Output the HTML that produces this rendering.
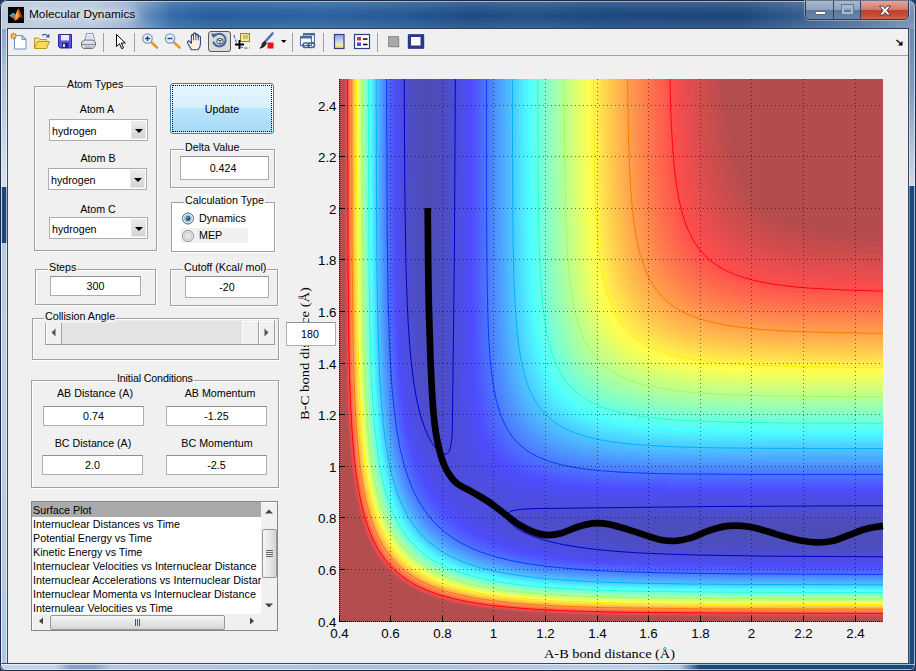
<!DOCTYPE html>
<html><head><meta charset="utf-8"><title>Molecular Dynamics</title>
<style>
*{box-sizing:border-box;margin:0;padding:0}
html,body{width:916px;height:671px;overflow:hidden;background:#16365f}
body{position:relative;font-family:"Liberation Sans",sans-serif;font-size:10.7px;color:#000}
.a{position:absolute}
#win{left:0;top:0;width:916px;height:671px;border-radius:7px 7px 6px 6px;overflow:hidden;
 background:#6f8fb8}
#tb{left:0;top:0;width:916px;height:29px;background:linear-gradient(90deg,#b9c9dd 0,#b3c5db 95px,#94afd0 128px,#608bbb 148px,#326aa7 172px,#265d9c 210px,#2b629f 320px,#245894 400px,#1c4b85 470px,#214f88 530px,#1a4780 600px,#1b467b 740px,#345b8d 800px,#50729e 860px,#7691b4 916px)}
#tbsh{left:0;top:0;width:916px;height:29px;background:linear-gradient(180deg,rgba(255,255,255,.18) 0,rgba(255,255,255,.05) 10px,rgba(0,0,0,0) 16px,rgba(255,255,255,.12) 29px)}
#bl{left:0;top:29px;width:8px;height:642px;background:linear-gradient(90deg,#2a3a55 0,#2a3a55 1px,rgba(255,255,255,.55) 1px,rgba(255,255,255,.55) 2px,rgba(255,255,255,0) 2px,rgba(255,255,255,0) 6px,rgba(255,255,255,.6) 6px,rgba(255,255,255,.6) 7px,#3b4a60 7px),linear-gradient(180deg,#8ba6c8 0,#a9c0dc 40px,#c9d8ea 120px,#d3dfee 158px,#1a4882 158px,#1a4882 214px,#b4cbe8 214px,#b9cfea 400px,#adc6e6 642px)}
#br{left:908px;top:29px;width:8px;height:642px;background:linear-gradient(90deg,#1f2d45 0,#1f2d45 1px,rgba(255,255,255,.35) 1px,rgba(255,255,255,.35) 2px,rgba(255,255,255,0) 2px,rgba(255,255,255,0) 6px,rgba(255,255,255,.25) 6px,rgba(255,255,255,.25) 7px,#101a2c 7px),linear-gradient(180deg,#6a89b1 0,#7f9bbf 60px,#b9cadf 130px,#cfdbe9 157px,#1a4882 157px,#1a4882 642px)}
#br2{display:none}
#bb{left:0;top:663px;width:916px;height:8px;background:linear-gradient(180deg,#3b4a60 0,#3b4a60 1px,rgba(255,255,255,.6) 1px,rgba(255,255,255,.6) 2px,rgba(255,255,255,0) 2px,rgba(255,255,255,0) 6px,rgba(255,255,255,.3) 6px,rgba(255,255,255,.3) 7px,#1f2d45 7px),linear-gradient(90deg,#c3d4ea 0,#c3d4ea 55px,#8aa3c9 70px,#8aa3c9 95px,#b2c9e6 110px,#a9c2e2 400px,#bcd0ea 640px,#b0c6e2 680px,#1a4882 700px,#1a4882 916px)}
#client{left:8px;top:29px;width:900px;height:634px;background:#f0f0f0}
#tool{left:8px;top:29px;width:900px;height:27px;background:#f0f0f0;border-bottom:1px solid #a0a0a0}
.ttl{left:29px;top:6px;font-size:11.8px;line-height:16px;white-space:nowrap;color:#000;text-shadow:0 0 6px #fff,0 0 10px #fff,0 0 14px #fff}
.panel{border:1px solid #a0a0a0;box-shadow:1px 1px 0 #fff, inset 1px 1px 0 #fff}
.pt{background:#f0f0f0;line-height:13px;height:13px;white-space:nowrap;padding:0 1px}
.lbl{line-height:13px;height:13px;white-space:nowrap;text-align:center}
.ed{background:#fff;border:1px solid #abadb3;border-top-color:#8e8f93;text-align:center;white-space:nowrap}
.dd{background:#fff;border:1px solid #abadb3;white-space:nowrap}
.dd span{position:absolute;left:2px;top:5px;line-height:13px}
.dd i{position:absolute;right:1px;top:1px;bottom:1px;width:15px;background:linear-gradient(#ececec,#dedede 50%,#d4d4d4);border:1px solid #e8e8e8}
.dd i:after{content:"";position:absolute;left:3px;top:7px;border:4px solid transparent;border-top:4px solid #000;border-bottom:none}
svg text{font-family:"Liberation Sans",sans-serif}
.li{left:0;width:229px;height:14px;line-height:14px;white-space:nowrap;overflow:hidden;padding-left:1px;font-size:10.75px}
</style></head><body>
<div id="win" class="a">
<div id="tb" class="a"></div><div id="tbsh" class="a"></div>
<div id="bl" class="a"></div><div id="br" class="a"></div><div id="br2" class="a"></div><div id="bb" class="a"></div>
<div class="a" style="left:0;top:0;width:916px;height:671px;border:1px solid #1c2a44;border-radius:7px 7px 6px 6px;box-shadow:inset 0 0 0 1px rgba(235,243,252,.55)"></div>
<div id="client" class="a"></div>
<div class="a" style="left:7px;top:28px;width:902px;height:636px;border:1px solid #3a4760;border-top-color:#2f3c55"></div>
<div id="tool" class="a"></div>

<!-- title -->
<svg class="a" style="left:8px;top:7px" width="16" height="16" viewBox="0 0 16 16"><rect width="16" height="16" fill="#000"/><path d="M1 8.5L5.5 5.5L7.5 7.5L4.5 11z" fill="#3f9fc0"/><path d="M4.5 11L7.5 7.5L10 1.5L11 2L14.8 11.5L12.5 9.5L9.5 12.5L7 14L6 12z" fill="#e8641a"/><path d="M10 1.5L11 2L14.8 11.5L12.5 9.5z" fill="#a12a12"/><path d="M7 9L9.8 3L10.5 9L8 12.5z" fill="#f9b233"/></svg>
<div class="a ttl">Molecular Dynamics</div>
<!-- caption buttons -->
<div class="a" style="left:805px;top:1px;width:104px;height:19px;border:1px solid #2a3a52;border-top:none;border-radius:0 0 5px 5px;overflow:hidden;box-shadow:0 0 0 1px rgba(255,255,255,.35)">
 <div class="a" style="left:0;top:0;width:28px;height:19px;background:linear-gradient(#a9bad0 0,#8ea3bf 45%,#5d789d 50%,#6985aa 100%);border-right:1px solid #2f4260"></div>
 <div class="a" style="left:28px;top:0;width:27px;height:19px;background:linear-gradient(#a9bad0 0,#8ea3bf 45%,#5d789d 50%,#6985aa 100%);border-right:1px solid #2f4260"></div>
 <div class="a" style="left:55px;top:0;width:48px;height:19px;background:linear-gradient(#e3a79b 0,#d3786a 45%,#c0402a 50%,#c6523a 80%,#d0705a 100%)"></div>
 <div class="a" style="left:9px;top:10px;width:11px;height:4px;background:#fff;border:1px solid #5a6b85;border-radius:1px"></div>
 <div class="a" style="left:36px;top:4px;width:11px;height:9px;border:2px solid #a9b9cf;border-top-width:3px;box-shadow:0 0 0 1px #64789a;background:transparent"></div>
 <svg class="a" style="left:71px;top:3px" width="16" height="13" viewBox="0 0 16 13"><path d="M2.5 2L6 2L8 4.6L10 2L13.5 2L10 6.5L13.5 11L10 11L8 8.4L6 11L2.5 11L6 6.5z" fill="#fff" stroke="#5b3a38" stroke-width="1"/></svg>
</div>

<svg class="a" style="left:0;top:29px" width="916" height="27" viewBox="0 29 916 27">
<!-- new -->
<path d="M14.5 35.5h7.5l4 4v9.5h-11.5z" fill="#fff" stroke="#6f8fc3" stroke-width="1"/>
<path d="M22 35.5v4h4z" fill="#c9d6ee" stroke="#6f8fc3" stroke-width="1" stroke-linejoin="round"/>
<path d="M13.5 32.5v7M10 36h7M11 33.5l5 5M16 33.5l-5 5" stroke="#e8782a" stroke-width="1.1"/>
<circle cx="13.5" cy="36" r="2" fill="#ffd75a" stroke="#e8782a" stroke-width=".8"/>
<!-- open -->
<path d="M34.5 48.5v-10.5h4l1.5 1.5h6.5v2" fill="#f7e28a" stroke="#b8951e" stroke-width="1"/>
<path d="M34.5 48.5l3-7h12l-3 7z" fill="#fbd85a" stroke="#b8951e" stroke-width="1" stroke-linejoin="round"/>
<path d="M42 35.5q3-2.5 6 .5" fill="none" stroke="#3a64b4" stroke-width="1.3"/><path d="M49.5 33.5v4h-4z" fill="#3a64b4"/>
<!-- save -->
<path d="M58.5 34.5h13v13.5h-11.5l-1.5-1.5z" fill="#5656dc" stroke="#2b2b96" stroke-width="1"/>
<rect x="61" y="35" width="8" height="5.5" fill="#e9e9f7"/>
<rect x="62" y="43" width="6.5" height="5" fill="#23238a"/><rect x="63" y="44" width="2" height="3" fill="#dcdcf0"/>
<!-- print -->
<path d="M85 40.500l1.500-7h6.500l1.500 7z" fill="#fff" stroke="#7f93b8" stroke-width="1"/>
<path d="M87 36h5M86.700 38h5.600" stroke="#9db4dc" stroke-width=".8"/>
<path d="M81.500 42l3-2h8.500l2.500 2v3.500l-2.500 3h-9.500l-2-2z" fill="#d3d6db" stroke="#70757d" stroke-width="1" stroke-linejoin="round"/>
<path d="M82 44.500h13" stroke="#8b9098" stroke-width="1"/><path d="M84.500 42h8" stroke="#f5f5f5" stroke-width="1"/><path d="M85 47h7" stroke="#9a9ea6" stroke-width="1"/>
<!-- separators -->
<path d="M103.500 33v19M134.500 33v19M292.500 33v19M323.500 33v19M377.500 33v19" stroke="#a0a0a0" stroke-width="1"/>
<!-- pointer -->
<path d="M116.500 34.500v12l3-2.800l2.200 5l1.800-.8l-2.200-4.900h4z" fill="#fff" stroke="#000" stroke-width="1" stroke-linejoin="miter"/>
<!-- zoom in -->
<path d="M151 42l6 5.500" stroke="#e79a2e" stroke-width="2.600" stroke-linecap="round"/>
<circle cx="147.500" cy="38.500" r="4.700" fill="#e6f1fb" stroke="#7d9cc6" stroke-width="1.300"/>
<path d="M145 38.500h5M147.500 36v5" stroke="#1c3f8f" stroke-width="1.300"/>
<!-- zoom out -->
<path d="M173.500 42l6 5.500" stroke="#e79a2e" stroke-width="2.600" stroke-linecap="round"/>
<circle cx="170" cy="38.500" r="4.700" fill="#e6f1fb" stroke="#7d9cc6" stroke-width="1.300"/>
<path d="M167.500 38.500h5" stroke="#1c3f8f" stroke-width="1.300"/>
<!-- hand -->
<g transform="translate(195.5,41.5) scale(1.18) translate(-195,-41.5)"><path d="M191.500 48.500l-3-5.500q-.8-2 1-2l2 2v-6.500q.9-1.600 1.800 0v-1.500q1-1.600 2 0v1q1-1.500 2 0v1.500q1-1.300 1.900 0v6q0 3-2.200 5z" fill="#fdf3dc" stroke="#2b4a8a" stroke-width="1" stroke-linejoin="round"/>
<path d="M193.300 36.500v4M195.300 35v5.500M197.300 36v4.500" stroke="#2b4a8a" stroke-width=".8"/></g>
<!-- rotate (pressed) -->
<rect x="208.500" y="31.500" width="22" height="20" rx="2.500" fill="#dcdcdc" stroke="#585858" stroke-width="1"/>
<path d="M214.500 36a6.300 6.300 0 1 1-1.300 5.500" fill="none" stroke="#46669a" stroke-width="2.100"/>
<path d="M211 33.500l5.800.300l-3.500 4.500z" fill="#46669a"/>
<path d="M217 39.500l3-1.200l3 1.200v3.300l-3 1.400l-3-1.400z M217 39.500l3 1.300l3-1.300M220 40.800v3.400" fill="#eef2f8" stroke="#33445f" stroke-width=".9" stroke-linejoin="round"/>
<!-- data cursor -->
<rect x="240.500" y="33.500" width="9" height="8" fill="#f4ea8e" stroke="#8a8446" stroke-width="1"/>
<path d="M243 36h5M243 38h5" stroke="#8a8446" stroke-width=".8"/>
<path d="M234 35q2 9 6.500 12q4 1.500 9 1" fill="none" stroke="#2a3fd8" stroke-width="1" stroke-dasharray="3 1.500"/>
<path d="M239.500 40v9M235 44.500h9" stroke="#000" stroke-width="1.800"/>
<!-- brush -->
<path d="M272.500 33.500l-8 9" stroke="#4a6fc0" stroke-width="2.600" stroke-linecap="round"/>
<path d="M264.700 41.500l1.800 1.800q-1.500 4-6.500 5q2.500-2.500 2.200-5z" fill="#2a2a2a" stroke="#000" stroke-width=".7"/>
<rect x="267.500" y="42.500" width="6" height="6" fill="#ee1111"/>
<path d="M281 40h5.500l-2.750 3z" fill="#000"/>
<!-- link -->
<rect x="303.500" y="33.500" width="11" height="9" fill="#f3f6fb" stroke="#4c6a9e" stroke-width="1"/><rect x="303.500" y="33.500" width="11" height="2" fill="#4c6a9e"/>
<rect x="300.500" y="36.500" width="11" height="9" fill="#f3f6fb" stroke="#4c6a9e" stroke-width="1"/><rect x="300.500" y="36.500" width="11" height="2" fill="#4c6a9e"/>
<rect x="303" y="43" width="6" height="4.500" rx="2.200" fill="none" stroke="#3b5f9a" stroke-width="1.500"/><rect x="308" y="43" width="6.500" height="4.500" rx="2.200" fill="none" stroke="#3b5f9a" stroke-width="1.500"/>
<!-- colorbar -->
<defs><linearGradient id="cbg" x1="0" y1="0" x2="0" y2="1"><stop offset="0" stop-color="#8f9df0"/><stop offset=".45" stop-color="#b9d4f3"/><stop offset=".75" stop-color="#f3eea0"/><stop offset="1" stop-color="#f3c070"/></linearGradient></defs>
<rect x="334.500" y="34.500" width="9.500" height="14" fill="url(#cbg)" stroke="#2f3f86" stroke-width="1.200"/>
<!-- legend -->
<rect x="354.500" y="34.500" width="15" height="14" fill="#fff" stroke="#2f3f86" stroke-width="1.200"/>
<rect x="357" y="37" width="4" height="3.500" fill="#e03030"/><rect x="357" y="42.500" width="4" height="3.500" fill="#3a50d8"/>
<path d="M363 39h4.500M363 44.500h4.500" stroke="#000" stroke-width="1.300"/>
<!-- hide tools -->
<rect x="389.500" y="37.500" width="10" height="10" fill="#7d7d7d" opacity=".45"/>
<rect x="388.500" y="36.500" width="10" height="10" fill="#a9a9a9" stroke="#8f8f8f" stroke-width="1"/>
<!-- show tools -->
<rect x="408.500" y="35" width="15" height="13" fill="#fff" stroke="#2a3a86" stroke-width="1.400"/>
<rect x="408" y="34.500" width="16" height="2.500" fill="#2a3a86"/><rect x="408" y="45.500" width="16" height="3" fill="#2a3a86"/><rect x="408" y="35" width="3" height="13" fill="#2a3a86"/><rect x="420.500" y="35" width="3.500" height="13" fill="#2a3a86"/>
<!-- corner arrow -->
<path d="M896.500 40l4 3.500" stroke="#000" stroke-width="1.300" fill="none"/><path d="M902.500 41v4.500h-4.500z" fill="#000"/>
</svg>


<!-- Atom Types panel -->
<div class="a panel" style="left:34px;top:86px;width:123px;height:165px"></div>
<div class="a pt" style="left:66px;top:78px">Atom Types</div>
<div class="a lbl" style="left:57px;top:103px;width:80px">Atom A</div>
<div class="a dd" style="left:49px;top:119px;width:99px;height:22px"><span>hydrogen</span><i></i></div>
<div class="a lbl" style="left:58px;top:152px;width:80px">Atom B</div>
<div class="a dd" style="left:48px;top:168px;width:99px;height:22px"><span>hydrogen</span><i></i></div>
<div class="a lbl" style="left:58px;top:203px;width:80px">Atom C</div>
<div class="a dd" style="left:49px;top:217px;width:99px;height:22px"><span>hydrogen</span><i></i></div>

<!-- Update button -->
<div class="a" style="left:170px;top:83px;width:104px;height:51px;border:1px solid #3c7fb1;border-radius:3px;background:linear-gradient(#e8f5fd 0,#d7effc 49%,#bce5fd 50%,#a5d8f5 100%);box-shadow:inset 0 0 0 1px rgba(255,255,255,.7)"></div>
<div class="a" style="left:172px;top:85px;width:100px;height:47px;border:1px dotted #000"></div>
<div class="a lbl" style="left:182px;top:103px;width:80px">Update</div>

<!-- Delta Value -->
<div class="a panel" style="left:170px;top:149px;width:105px;height:39px"></div>
<div class="a pt" style="left:184px;top:141px">Delta Value</div>
<div class="a ed" style="left:180px;top:156px;width:89px;height:24px;line-height:22px;padding-right:3px">0.424</div>

<!-- Calculation Type -->
<div class="a panel" style="left:171px;top:202px;width:104px;height:50px;background:#fff"></div>
<div class="a pt" style="left:184px;top:194px;background:#fbfbfb">Calculation Type</div>
<div class="a" style="left:181px;top:228px;width:67px;height:15px;background:#f0f0f0"></div>
<svg class="a" style="left:181px;top:211px" width="14" height="32" viewBox="0 0 14 32">
 <circle cx="7" cy="7.5" r="5.5" fill="#e9eef3" stroke="#5a6a78"/><circle cx="7" cy="7.5" r="3.6" fill="#bfe4f7" stroke="#7aa9c4" stroke-width=".8"/><circle cx="7" cy="7.5" r="2.4" fill="#1c4f77"/><circle cx="6.3" cy="6.8" r="1" fill="#6fb6dc"/>
 <circle cx="7" cy="25" r="5.5" fill="#f4f4f4" stroke="#8e8f8f"/><circle cx="7" cy="25" r="3.8" fill="#e4e4e4" stroke="#c2c2c2" stroke-width=".8"/>
</svg>
<div class="a" style="left:199px;top:212px;line-height:13px">Dynamics</div>
<div class="a" style="left:199px;top:229px;line-height:13px">MEP</div>

<!-- Steps -->
<div class="a panel" style="left:35px;top:269px;width:121px;height:36px"></div>
<div class="a pt" style="left:48px;top:261px">Steps</div>
<div class="a ed" style="left:50px;top:276px;width:91px;height:20px;line-height:18px">300</div>
<!-- Cutoff -->
<div class="a panel" style="left:170px;top:269px;width:108px;height:37px"></div>
<div class="a pt" style="left:183px;top:261px">Cutoff (Kcal/ mol)</div>
<div class="a ed" style="left:185px;top:276px;width:84px;height:22px;line-height:20px">-20</div>

<!-- Collision Angle -->
<div class="a panel" style="left:32px;top:318px;width:247px;height:42px"></div>
<div class="a pt" style="left:44px;top:310px;z-index:4">Collision Angle</div>
<div class="a" style="left:45px;top:320px;width:230px;height:25px;background:#e3e3e3;border-left:1px solid #a8a8a8;border-bottom:1px solid #9a9a9a;border-right:1px solid #a0a0a0;border-top:1px solid #ececec"></div>
<div class="a" style="left:46px;top:321px;width:16px;height:23px;background:#f0f0f0;border-right:1px solid #a0a0a0;border-left:1px solid #fff;border-top:1px solid #fff"></div>
<div class="a" style="left:259px;top:321px;width:15px;height:23px;background:#f0f0f0;border-left:1px solid #fff;border-top:1px solid #fff"></div>
<div class="a" style="left:242px;top:321px;width:17px;height:23px;background:#f0f0f0;border-right:1px solid #a0a0a0;border-left:1px solid #fff;border-top:1px solid #fff"></div>
<svg class="a" style="left:45px;top:320px" width="230" height="25"><path d="M10.500 8.500v8l-4-4z" fill="#555"/><path d="M219.500 8.500v8l4-4z" fill="#555"/></svg>
<!-- 180 -->
<div class="a ed" style="left:286px;top:322px;width:50px;height:24px;line-height:22px;z-index:5;padding-right:2px">180</div>

<!-- Initial Conditions -->
<div class="a panel" style="left:31px;top:380px;width:248px;height:108px"></div>
<div class="a pt" style="left:116px;top:372px;letter-spacing:-.15px">Initial Conditions</div>
<div class="a lbl" style="left:45px;top:387px;width:100px">AB Distance (A)</div>
<div class="a lbl" style="left:170px;top:387px;width:100px">AB Momentum</div>
<div class="a ed" style="left:43px;top:406px;width:101px;height:20px;line-height:18px">0.74</div>
<div class="a ed" style="left:166px;top:406px;width:101px;height:20px;line-height:18px">-1.25</div>
<div class="a lbl" style="left:43px;top:437px;width:100px">BC Distance (A)</div>
<div class="a lbl" style="left:167px;top:437px;width:100px">BC Momentum</div>
<div class="a ed" style="left:42px;top:455px;width:101px;height:20px;line-height:18px">2.0</div>
<div class="a ed" style="left:166px;top:455px;width:101px;height:20px;line-height:18px">-2.5</div>

<!-- listbox -->
<div class="a" style="left:31px;top:501px;width:247px;height:130px;background:#fff;border:1px solid #828790;overflow:hidden">
 <div class="a" style="left:0;top:0;width:229px;height:15px;background:#aaa"></div><div class="a li" style="top:1px">Surface Plot</div>
 <div class="a li" style="top:15px">Internuclear Distances vs Time</div>
 <div class="a li" style="top:29px">Potential Energy vs Time</div>
 <div class="a li" style="top:43px">Kinetic Energy vs Time</div>
 <div class="a li" style="top:57px">Internuclear Velocities vs Internuclear Distance</div>
 <div class="a li" style="top:71px">Internuclear Accelerations vs Internuclear Distance</div>
 <div class="a li" style="top:85px">Internuclear Momenta vs Internuclear Distance</div>
 <div class="a li" style="top:99px">Internulear Velocities vs Time</div>
 <!-- v scrollbar -->
 <div class="a" style="left:229px;top:1px;width:16px;height:111px;background:#f0f0f0"></div>
 <div class="a" style="left:230px;top:27px;width:15px;height:49px;background:linear-gradient(90deg,#f5f5f5,#e6e6e6 50%,#d6d6d6);border:1px solid #979797;border-radius:2px"></div>
 <svg class="a" style="left:229px;top:1px" width="16" height="111"><path d="M4 10.5h8l-4-4z" fill="#444"/><path d="M4 100.5h8l-4 4z" fill="#444"/><path d="M5 47.5h7M5 49.5h7M5 51.5h7M5 53.5h7" stroke="#666" stroke-width="1"/></svg>
 <!-- h scrollbar -->
 <div class="a" style="left:1px;top:112px;width:244px;height:16px;background:#f0f0f0"></div>
 <div class="a" style="left:18px;top:113px;width:175px;height:15px;background:linear-gradient(#f5f5f5,#e6e6e6 50%,#d6d6d6);border:1px solid #979797;border-radius:2px"></div>
 <svg class="a" style="left:1px;top:112px" width="244" height="16"><path d="M10 3.500v7l-4-3.500z" fill="#444"/><path d="M217 3.500v7l4-3.500z" fill="#444"/><path d="M102.5 5v7M104.5 5v7M106.5 5v7" stroke="#555" stroke-width="1"/></svg>
</div>

<!-- PLOT -->
<svg class="a" style="left:290px;top:56px" width="618" height="607" viewBox="0 0 618 607">
<g transform="translate(49,23)">
<g shape-rendering="crispEdges">
<rect width="544" height="543" fill="#4d4db8"/>
<path fill="#4d4dbd" d="M0 0l80.8 0 0.8 61.3 1.4 51.4 1.3 24.8 1.4 15.5 1.3 8.7 1.4 3.5 1.4-1.3 1.3-6.6 1.4-13.6 1.3-24.4 1.4-46.6 1-72.7 447.8 0 0 446.8-78.9 1.1-45.4 1.4-22.6 1.4-12.5 1.3-5.9 1.4-0.7 1.4 4 1.3 9.4 1.4 16.4 1.3 22 1.1 55.7 1.6 58.5 0.7 0 80.8-544 0 0-541.6z"/>
<path fill="#4d4dc3" d="M0 0l76 0 0.5 62.4 0.8 54.3 1 38.1 1.3 29.8 2 27.7 1.4 12.5 1.3 9.1 1.4 6.8 1.3 4.7 1.4 3 1.4 1.3 1.3-0.5 1.4-2.4 1.3-4.8 1.4-7.8 1.8-17 1.5-24.4 1.1-28.5 1-42.9 1.3-121.4 442.1 0 0 441.1-122.4 1.3-40.8 0.9-29.9 1.2-25.9 1.6-17.4 1.9-7.3 1.3-4.5 1.4-2.2 1.3-0.2 1.4 1.5 1.4 3.1 1.3 5 1.4 7 1.3 9.5 1.4 12.8 1.4 25.4 1.7 27.2 1.3 39.4 1.1 54.4 0.8 65.3 0.5 0 76-544 0 0-541.6z"/>
<path fill="#4d4dc8" d="M0 0l72.7 0 0.6 84.2 0.8 57 1.4 46.1 2 36.7 2.7 29 1.5 10.4 2.6 13.6 1.4 5.1 2.7 7 1.4 2.1 1.3 1.2 1.4 0.1 1.3-0.9 2-3.8 1.5-5.4 1.2-6.8 2.1-18.5 1.8-29 1.3-34 1-48.8 0.8-63.9 0.5-81.4 438 0 0 437-144.2 1.2-47.6 1-36.7 1.3-29.9 1.9-17.7 2-5.4 0.9-6.8 1.8-2.4 0.9-1.7 1.1-1.1 1.6 0.2 1.3 1.3 1.4 2.2 1.4 7.3 2.7 5.2 1.3 13.5 2.6 11 1.5 29.5 2.7 35.6 1.9 46.3 1.4 55.7 0.8 85.7 0.6 0 72.7-544 0 0-541.6z"/>
<path fill="#4d4dcd" d="M0 0l70.1 0 0.6 95 0.9 61.1 1.6 50.2 2.1 36.7 1.7 19 1.9 15.1 1.4 9.3 2.7 12.9 2.7 9.6 2.7 6.9 2.7 4.4 1.4 1.3 1.3 0.7 1.4 0.1 1.4-0.8 0.9-1.1 1.8-3.6 1.3-4.7 1.4-7.1 1.4-10.8 0.9-10.5 1.6-28.5 1.4-44.8 1-52.9 0.7-66.5 0.4-91 434.6 0 0 433.6-157.8 1.1-57.4 1.1-41.4 1.3-29 1.7-11.4 1-10.1 1.4-6.7 1.3-4.5 1.4-2.8 1.4-1.6 1.3-0.6 1.4 0.1 1.3 0.8 1.4 1.4 1.3 4.6 2.8 6.9 2.7 9.8 2.7 12.7 2.5 9.9 1.6 14.6 1.7 19.1 1.7 35.3 2.1 51.7 1.6 66.7 1 89.7 0.5 0 70.1-544 0 0-541.6z"/>
<path fill="#4d4dd3" d="M0 0l67.8 0 0.6 95 1 70.3 1.5 50.5 1.2 22.3 1.4 19.8 1.7 17.7 2.3 17.9 2.7 15.1 2.8 11.3 2.7 8.7 4.1 9.4 2.7 4.3 1.3 1.6 2.8 1.9 1.3 0.3 1.4-0.2 1.3-0.9 1.4-1.8 1.4-3 1.6-6.3 1.1-6.7 1.1-10.9 1.6-27.7 1.4-45.6 1.1-66.5 0.8-77.4 0.4-99.1 431.5 0 0 430.5-100.6 0.5-79 0.7-66.6 1.2-46.2 1.4-25.8 1.6-10.9 1.1-6.8 1.2-5.8 1.6-2.8 1.4-1.7 1.3-0.8 1.4-0.1 1.4 0.3 1.3 2.1 2.7 1.6 1.4 4.4 2.7 9.5 4.1 8.8 2.7 11.5 2.7 15.3 2.7 16.2 2.1 17.6 1.7 22.9 1.7 19.3 0.9 53 1.7 68 0.9 96.6 0.6 0 67.8-544 0 0-541.6z"/>
<path fill="#4d4dd8" d="M0 0l65.9 0 0.6 112.7 1.2 71.9 1.9 51.6 1.4 21.7 1.8 21.7 2 16.6 2.7 17 2.7 12.7 4.1 14.2 4.1 10.4 2.7 5.3 2.7 4.3 2.8 3.3 2.7 2.4 2.7 1.3 1.4 0.1 1.3-0.3 2-1.7 1.5-2.7 1.2-4.1 1.4-10.9 1.1-19 1.1-52.9 1.2-89.1 1.1-186.5 428.7 0 0 427.7-189 1.1-85.7 1.2-54.4 1.1-17.7 0.9-12.2 1.6-3.3 0.8-3.2 1.4-1.7 1.4-0.8 1.3-0.2 1.3 0.2 1.4 1.3 2.7 2.5 2.7 3.4 2.7 4.3 2.7 5.4 2.8 10.4 4 14.4 4.1 12.9 2.7 17.2 2.7 16 1.9 20.4 1.8 21.8 1.3 51.7 2 72.1 1.2 114.2 0.6 0 65.9-544 0 0-541.6z"/>
<path fill="#4d4dde" d="M0 0l64.1 0 0.7 119.5 1.3 76 0.9 28.5 1.3 27.1 1.7 23.1 2.1 20.8 2.7 19.3 3.6 18.3 4.6 16.3 4 10.8 5.5 10.8 2.7 4.3 4.1 5.3 4.1 4.2 2.7 2.1 2.7 1.6 2.7 0.8 1.4-0.1 1.3-0.5 1.4-1.4 1.4-4.1 0.5-6.7-1.1-47.5-0.2-35.3 1.2-167 0.5-126.2 426.1 0 0 425.1-125.1 0.4-170 1.3-35.4-0.3-44.9-1-6.8 0.3-4 0.9-1.9 0.9-0.9 0.9-0.8 1.8 0.4 2.7 2.1 4.1 2.2 2.7 4.2 4.1 5.4 4.1 4.3 2.7 10.9 5.4 10.9 4.1 14.5 4.1 19.4 3.9 17.7 2.5 19 2 24.5 1.8 25.8 1.3 29.9 1.1 76.2 1.3 122.4 0.7 0 64.1-544 0 0-541.6z"/>
<path fill="#4d4de3" d="M0 0l62.5 0 0.8 141.2 0.8 44.8 1.2 40.5 1.4 30.1 2.3 29.8 2.7 23.1 3.1 19.2 4.1 17.8 4.1 13.1 5.4 13.3 2.7 5.3 4.1 6.9 5.4 7.7 6.8 7.9 16.7 16.1 14.3 14.9 7.1 6.8 8.6 6.8 11 6.7 11.5 5.5 11.2 4.1 14.6 4 12.6 2.7 16.4 2.8 20.2 2.4 18.1 1.6 24.1 1.6 25.9 1.1 32.5 1 76.2 1.1 115.6 0.6 0 62.5-544 0 0-541.6zM120.4 0l423.6 0 0 422.6-262.5 1.1-38.1-0.3-28.5-0.8-15-0.9-13.6-1.3-12.2-1.7-9.5-2-8.2-2.4-6.8-2.7-5.4-3.1-5.5-4.5-4-4.9-3.1-5.4-2.8-6.8-2.8-9.5-1.9-9.5-1.5-10.9-1.3-13.6-0.9-16.2-0.9-28.6-0.2-38 1.1-259.2z"/>
<path fill="#4d4de8" d="M0 0l61 0 0.8 137.1 0.7 48.9 0.9 35.3 1.4 32.6 1.8 27.1 2.6 25.8 2.8 19 4.1 20.4 4.1 14.8 5.5 14.5 5.4 11.2 6.8 11 4.1 5.6 5.4 6.6 11.5 12.3 12.9 12.2 10 8.1 10.1 6.8 10 5.5 12.7 5.4 12.3 4.1 16.1 4 14.6 2.8 20.4 2.9 23.1 2.3 22.3 1.5 28.3 1.4 29.7 0.9 80.2 1.3 122.4 0.6 0 61-544 0 0-541.6zM122.8 0l421.2 0 0 420.2-248.9 0.8-42.1-0.4-30-1.1-14.9-1-13.6-1.5-12.3-2-9.5-2.3-9.5-3.2-6.8-3.1-6.8-4.4-4.8-4.3-4.7-5.6-4-6.6-3.6-8.1-2.5-8.2-2.4-10.8-1.7-10.9-1.4-12.2-1-14.9-1.1-29.9-0.4-42.1 0.8-247z"/>
<path fill="#4d4dee" d="M0 0l59.6 0 0.7 133 0.6 47.5 0.9 36.7 1.2 31.2 1.7 28.5 1.9 23.2 2.8 22 2.7 16 4.1 17.9 2.7 9.3 2.7 7.9 5.4 12.9 6.8 12.4 8.2 11.8 5.4 6.7 5.5 6 11.8 11.4 10 8.1 12.3 8.2 10.3 5.4 12.9 5.5 12.4 4 16.3 4.1 14.6 2.8 20.4 2.9 21.8 2.1 23.3 1.7 27.9 1.4 30.4 0.9 81.6 1.3 125.1 0.6 0 59.6-544 0 0-541.6zM125 0l419 0 0 418-240.7 0.5-43.5-0.5-31.3-1.3-15-1.1-13.6-1.6-12.2-2.2-9.5-2.4-8.2-2.7-8.2-3.8-6.8-4.4-5.6-4.8-4.7-5.5-4.4-6.7-3.8-8.2-2.8-8.1-2.4-9.5-2.2-12.3-1.6-13.5-1.3-16.3-1.2-31.2-0.5-43.5 0.5-237.5z"/>
<path fill="#4d4df3" d="M0 0l58.3 0 0.7 135.8 0.6 47.5 0.9 36.6 1.2 32.6 1.7 28.5 1.9 22 2.7 22.2 2.9 16.9 4 17.6 2.6 9.1 2.7 8 5.5 13 6.8 12.7 8.1 11.9 9.6 11.3 10.4 10.1 10 8.1 5.9 4.1 6.6 4 10.4 5.5 13.1 5.4 12.6 4.1 16.4 4.1 15.2 2.8 20.4 2.8 21.8 2.2 23.4 1.7 28.4 1.3 31.1 1 81.6 1.2 126.5 0.6 0 58.3-544 0 0-541.6zM127.2 0l416.8 0 0 415.8-232.6 0.4-44.8-0.6-32.7-1.4-16.3-1.4-13.6-1.7-10.9-1.9-10.9-2.8-9.5-3.4-7.8-3.9-6.2-4.1-6.2-5.4-4.6-5.4-4.4-6.8-3.9-8.2-3.3-9.5-2.4-9.5-2.2-12.2-1.6-13.6-1.3-14.9-1.4-32.6-0.6-43.4 0.4-232.1z"/>
<path fill="#4d4df8" d="M0 0l57.1 0 0.6 135.8 0.6 47.5 0.8 36.6 1.2 32.6 1.6 28.5 2 23.9 2.5 20.9 3 18.1 4 18.2 2.8 9.5 2.7 8.1 5.4 13.2 6.8 12.8 6.8 10.2 4.1 5.3 5.4 6.3 9.8 9.6 10.1 8.2 10.3 6.7 12.8 6.8 13.3 5.5 12.7 4 16.6 4.1 15.1 2.8 20.4 2.8 23.1 2.3 23.8 1.6 29.2 1.4 28.6 0.8 81.6 1.3 129.2 0.5 0 57.1-544 0 0-541.6zM129.4 0l414.6 0 0 413.6-227.1 0.3-46.3-0.7-32.6-1.4-15-1.3-13.6-1.7-12.2-2.2-10.9-2.8-9.5-3.4-8.1-4-6.9-4.5-5.7-5-5.1-6-4.9-7.6-3.9-8.1-2.9-8.2-2.8-10.8-2.2-12.3-1.8-13.5-1.2-15-1.5-32.5-0.7-46.2 0.3-225.3z"/>
<path fill="#4d4dfe" d="M0 0l55.9 0 0.6 137.1 0.6 47.7 0.8 36.5 1.2 32.6 1.6 28.5 1.9 23.4 2.4 21.4 3 18.5 4.1 18.6 4.1 13.9 5.4 14.2 6.7 13.5 6.9 10.9 4.1 5.4 5.4 6.5 9.8 9.8 10.1 8.1 10.3 6.8 13 6.8 12.6 5.1 13.7 4.4 16.8 4.1 14.9 2.7 19.9 2.7 21.7 2.2 24.5 1.6 28.6 1.4 29.9 0.9 81.6 1.2 131.9 0.6 0 55.9-544 0 0-541.6zM131.4 0l412.6 0 0 411.6-223 0.1-46.3-0.7-34-1.6-14.9-1.4-13.6-1.8-12.3-2.3-10.9-2.9-9.5-3.5-7.7-3.8-7.2-4.9-5.5-4.8-5.4-6.2-4.7-7.2-3.9-8.1-3-8.2-2.6-9.5-2.5-12.2-1.8-13.6-1.5-16.3-1.7-33.9-0.7-46.2 0.1-221.2z"/>
<path fill="#4d51ff" d="M0 0l54.8 0 0.6 138.5 1.4 84.1 1.2 34 1.5 27.1 1.7 22.1 2.6 22.7 2.8 18.4 4.1 19 4.1 14.2 5.4 14.4 2.8 6 4 7.8 6.8 10.7 8.2 10.4 4.6 5 5.6 5.4 10.1 8.2 11 7.1 12.5 6.5 13.3 5.3 13.3 4.2 17.2 4 15.2 2.7 20.3 2.8 21.1 2 24.4 1.6 27.2 1.3 31.3 0.9 81.6 1.3 133.3 0.5 0 54.8-544 0 0-541.6zM133.4 0l410.6 0 0 409.6-219 0-46.2-0.8-34-1.6-16.3-1.5-13.6-1.9-12.3-2.3-9.5-2.6-9.5-3.4-8.2-4-7.1-4.6-6.5-5.5-5.4-6.3-4.8-7.2-4-8.2-3.4-9.5-2.6-9.5-2.4-12.2-1.8-13.6-1.5-16.3-1.7-33.9-0.8-46.1 0-217.2z"/>
<path fill="#4d56ff" d="M0 0l53.7 0 0.6 141.2 1.4 84.1 1.2 34 1.5 27.1 1.7 21.8 2.5 21.7 2.7 17.8 4.1 19.4 4 14.4 5.5 14.7 6.7 13.8 6.9 11 8.1 10.4 9.7 9.8 10 8.1 10.5 6.8 13.2 6.8 13.8 5.4 13.6 4.2 17.3 4 15.6 2.7 21.1 2.7 20.8 1.9 24.4 1.6 27.2 1.2 31.3 1 80.3 1.1 134.6 0.6 0 53.7-544 0 0-541.6zM135.4 0l408.6 0 0 407.6-152.3 0.2-62.6-0.2-47.6-0.9-34-1.7-16.3-1.6-13.6-1.8-10.9-2.2-10.9-2.8-9.5-3.5-8.1-4-7.6-4.9-6.3-5.5-5.2-5.9-5-7.6-4.1-8.2-3.4-9.5-3-10.8-2.3-12.3-1.9-13.5-1.4-15-1.7-33.9-0.9-47.5-0.2-62.5 0.2-150.6z"/>
<path fill="#4d5bff" d="M0 0l52.7 0 0.5 135.8 1.3 85.5 1.2 35.3 1.4 28 1.8 23.6 2.3 21.3 2.9 19.4 3.9 19 4.1 14.8 5.4 14.9 6.6 13.7 7 11.3 8.2 10.5 9.3 9.4 10.1 8.2 10.5 6.8 10.9 5.6 13.6 5.6 14.9 4.6 15 3.6 20.4 3.6 19 2.4 19.1 1.8 25.8 1.7 27.2 1.3 35.4 1 84.3 1.1 129.2 0.5 0 52.7-544 0 0-541.6zM137.3 0l406.7 0 0 405.7-148.2 0.1-64-0.2-47.6-0.9-34-1.8-16.3-1.6-13.6-1.9-12.2-2.5-10.9-3-9.5-3.6-8.2-4.2-6.9-4.6-6.1-5.5-5.8-6.8-4.4-6.7-4-8.2-3.5-9.5-3-10.9-2.3-12.2-1.9-13.5-1.4-15-1.8-33.9-1-47.5-0.2-63.8 0.1-146.6z"/>
<path fill="#4d61ff" d="M0 0l51.7 0 0.6 137.1 1.2 84.2 0.9 29.9 1.4 29.8 1.7 24.4 2.3 23.1 3 20.4 3.8 19.5 4.1 15.1 5.5 15.2 2.7 6.2 3.9 7.8 7 11.4 8.1 10.4 9.2 9.4 10.1 8.1 10.6 6.8 10.6 5.5 13.3 5.4 12.9 4.1 16.7 4 18.6 3.4 21.8 2.8 21.7 2 21.8 1.4 29.3 1.3 33.3 0.9 82.9 1.2 133.3 0.5 0 51.7-544 0 0-541.6zM139.2 0l404.8 0 0 403.8-144.2 0.1-65.2-0.3-47.6-0.9-34-1.9-16.4-1.6-13.6-1.9-12.2-2.5-10.9-3-9.5-3.6-8.2-4.2-6.8-4.5-6.8-6-5.4-6.4-4.8-7.4-4-8.1-3.5-9.5-2.9-10.9-2.2-10.8-2-13.6-1.6-16.3-1.8-33.9-1-47.5-0.3-65.2 0.1-142.5z"/>
<path fill="#4d66ff" d="M0 0l50.8 0 0.5 141.2 1.3 84.1 1 32.6 1.4 27.2 1.9 25.8 2.1 20.3 2.7 19 3.6 18.3 4.1 15.5 5.4 15.6 2.7 6.3 4.1 8.1 6.8 11.3 8.2 10.5 9.2 9.5 10.2 8.1 10.7 6.8 10.7 5.4 13.6 5.5 13.6 4.1 16.8 4 17.2 3 20.4 2.6 21.7 2 24.5 1.6 28.6 1.3 31.2 0.9 83 1.1 136 0.5 0 50.8-544 0 0-541.6zM141.1 0l402.9 0 0 401.9-141.4 0.1-65.3-0.3-47.6-1-34-1.9-16.3-1.6-13.6-1.9-12.3-2.5-10.9-3-9.5-3.6-8.1-4.1-7.1-4.7-6.5-5.7-5.5-6.2-4.8-7.1-4.1-8.2-3.6-9.5-3.1-10.8-2.5-12.2-2-13.6-1.6-16.3-1.1-16.3-0.8-19-1-47.5-0.3-65.2 0.1-138.4z"/>
<path fill="#4d6bff" d="M0 0l49.9 0 0.5 139.8 1.3 87.5 1.1 34.7 1.4 27.1 1.6 21.8 2.4 23 3 20.5 3.9 18.9 4.3 15.4 5.2 14.5 5.6 11.8 6.8 11.3 8.2 10.6 4.1 4.5 5.4 5.2 10.3 8.2 10.8 6.8 10.8 5.4 13.9 5.4 14.1 4.2 17.2 4 16.8 2.8 20.7 2.6 20.1 1.8 24.4 1.6 27.2 1.2 32.7 0.9 85.7 1.2 134.6 0.4 0 49.9-544 0 0-541.6zM143 0l401 0 0 400-138.7 0.1-65.3-0.3-47.6-1-19-0.9-16.4-1.1-14.9-1.5-13.6-2-12.3-2.5-10.8-3-9.6-3.5-8.3-4.2-8-5.3-6.2-5.6-5.9-6.7-4.4-6.8-4.1-8.2-3.6-9.5-3-10.8-2.5-12.3-2-13.5-1.6-16.3-1.9-34-1.1-47.5-0.3-65.1 0.1-137.1z"/>
<path fill="#4d71ff" d="M0 0l49 0 0.5 139.8 1.2 85.5 1 32.2 1.3 28.8 1.8 24.6 2.3 23.2 2.9 20.2 3.9 19.5 4.1 15.1 5.4 15.2 2.8 6.1 4 7.9 6.7 10.9 7.4 9.5 9.1 9.1 5.2 4.4 5.4 4.1 11 6.8 11.1 5.4 13.5 5.2 14.6 4.3 16.7 3.8 18.4 3 19.7 2.4 19 1.7 25.8 1.6 27.2 1.2 35.4 1 83 1 134.6 0.5 0 49-544 0 0-541.6zM144.8 0l399.2 0 0 398.2-136 0.1-65.3-0.4-47.6-1-19-0.9-16.3-1.1-16.4-1.7-13.6-2-12.2-2.6-10.8-3.1-9.6-3.7-8.2-4.1-6.8-4.6-6.8-5.9-5.4-6.3-5.2-7.9-4.1-8.2-3.5-9.5-3.1-10.9-2.4-12.2-2-13.6-1.5-14.9-1.2-16.3-0.9-19-1-47.5-0.4-65.1 0.1-134.4z"/>
<path fill="#4d76ff" d="M0 0l48.1 0 0.6 142.5 1.2 84.2 0.9 32.6 1.4 28.5 1.7 24.4 2.2 21.7 2.8 20.4 3.7 18.9 4 15.6 5.5 15.6 5.7 12.4 3.7 6.7 3.5 5.5 7.5 9.8 4.7 5.1 4.8 4.7 9.4 7.5 10.6 6.8 10.6 5.4 13.6 5.5 13.2 4 17.2 4.1 17.9 3.1 21.7 2.7 23.2 2.1 24.4 1.5 28.6 1.2 29.9 0.8 83 1.1 138.7 0.5 0 48.1-544 0 0-541.6zM146.6 0l397.4 0 0 396.4-131.9 0.1-66.7-0.4-47.6-1.1-19-0.9-16.3-1.1-16.3-1.7-13.6-2-12.3-2.5-10.9-3.1-9.5-3.6-8.1-4.1-8.1-5.4-6.1-5.4-5.9-6.8-4.5-6.8-4.1-8.2-3.7-9.5-3.1-10.8-2.5-12.2-2.1-13.6-1.7-16.3-1.1-16.3-0.9-19-1.1-47.5-0.4-65.2 0.1-131.6z"/>
<path fill="#4d7cff" d="M0 0l47.3 0 0.5 139.8 1.2 86.9 1 35.3 1.4 28.5 1.6 23.1 2.4 23.1 2.9 20.3 3.1 16.3 3.9 15.2 5.4 16 5.5 12.3 7 12.2 3.8 5.4 4.1 5.1 4.1 4.6 5.4 5.2 10.1 8.2 10.8 6.8 10.8 5.4 14 5.4 14.2 4.3 17.3 3.9 16.7 2.8 21.3 2.6 20.8 1.8 24.5 1.6 27.2 1.1 32.7 0.9 85.6 1.1 137.4 0.5 0 47.3-544 0 0-541.6zM148.4 0l395.6 0 0 394.6-130.6 0.1-66.6-0.4-47.6-1.2-19-0.9-16.4-1.1-16.3-1.8-13.6-2-12.2-2.6-10.9-3.2-9.5-3.7-8.2-4.2-6.8-4.6-6.8-6-5.4-6.2-5.2-7.9-4.1-8.2-3.6-9.5-3.1-10.8-2.5-12.2-2-13.6-1.7-16.3-1.2-16.3-0.9-19-1.1-47.5-0.4-65.2 0.1-128.9z"/>
<path fill="#4d81ff" d="M0 0l46.5 0 0.5 142.5 1.2 85.6 0.9 31.2 1.3 29.8 1.7 24.5 2.3 23.2 2.7 19.6 3.8 19.6 4.4 16.6 4.6 13.3 6.3 13.7 6.8 11.5 7.6 10.1 8.7 8.9 9 7.4 10.4 6.8 11.9 6 13.6 5.4 14.9 4.5 15 3.4 19 3.3 20.4 2.5 22.7 2 22.2 1.4 31.3 1.3 31.3 0.9 84.3 1 138.7 0.5 0 46.5-544 0 0-541.6zM150.1 0l393.9 0 0 392.9-127.8 0-66.7-0.4-47.6-1.2-19-0.9-16.3-1.1-16.4-1.8-13.6-2-12.2-2.6-10.9-3.1-9.5-3.7-8.2-4.1-8.1-5.5-6.1-5.4-5.9-6.8-4.5-6.8-4.2-8.1-3.8-9.9-3-10.5-2.6-12.2-2.1-13.6-1.7-16.3-1.2-16.3-0.9-19-1.2-47.5-0.4-65.1 0-127.6z"/>
<path fill="#4d86ff" d="M0 0l45.7 0 0.5 145.3 1.2 84.1 1 34 1.3 27.1 1.7 25.8 2 20.4 2.8 20.3 3.6 19.2 4.1 15.8 5.2 15.2 5.7 12.6 6.8 11.7 4.1 5.8 4.1 5 8.1 8.5 9.9 8 10.5 6.8 10.9 5.5 13.6 5.4 13.6 4.1 17.4 4 16.6 2.9 20.4 2.6 21.8 1.9 24.4 1.6 27.2 1.2 32.7 0.9 88.4 1.1 138.7 0.5 0 45.7-544 0 0-541.6zM151.9 0l392.1 0 0 391.1-126.5 0-66.6-0.4-47.6-1.2-19.1-0.9-16.3-1.2-16.3-1.8-13.6-2.1-12.2-2.6-10.9-3.2-9.5-3.8-8.2-4.2-6.8-4.6-6.8-5.9-5.5-6.2-5.4-8.2-4.1-8.1-3.6-9.5-3.1-10.9-2.6-12.2-2-13.6-1.6-14.9-1.2-16.3-1-19-1.2-47.5-0.4-66.6 0-124.8z"/>
<path fill="#4d8cff" d="M0 0l45 0 0.4 142.5 1.2 86.9 1 34.4 1.4 29.3 1.6 23.2 2.2 23.1 3 20.9 3.3 17.1 3.8 14.9 5.1 15.3 5.4 12.3 6.8 11.9 4.1 5.9 3.9 4.8 4.3 4.8 4.8 4.7 4.7 4.1 5.4 4.1 10.8 6.8 11 5.4 14.1 5.4 14.5 4.3 17.6 3.9 16.9 2.7 21.2 2.5 20.4 1.8 25.9 1.6 27.2 1.1 35.3 0.9 84.3 1 137.4 0.4 0 45-544 0 0-541.6zM153.6 0l390.4 0 0 389.4-125.1 0-66.7-0.5-47.6-1.2-19-1-16.3-1.2-15-1.6-13.6-2.1-12.2-2.6-11-3.2-9.4-3.6-8.8-4.5-7.5-5.1-6.5-5.8-5.8-6.8-5.3-8.1-4-8.2-3.6-9.5-3-10.8-2.5-12.2-2.1-13.6-1.6-14.9-1.2-16.3-0.9-19-1.2-47.6-0.5-65.1 0-123.5z"/>
<path fill="#4d91ff" d="M0 0l44.2 0 0.5 145.3 1.2 85.5 0.9 32.6 1.3 28.5 1.6 24.4 2.1 21.7 2.7 20.4 3.8 20.3 4.3 16.4 4.6 13.5 3.4 8.2 2.8 5.7 6.8 11.6 7.5 9.8 4.8 5.3 4.1 3.9 8.6 7.1 10.5 6.8 10.8 5.5 13.6 5.4 13.6 4.2 16.8 3.9 18.5 3.2 21.8 2.6 23.1 2 24.5 1.5 28.6 1.2 31.2 0.8 84.4 1 141.4 0.5 0 44.2-544 0 0-541.6zM155.3 0l388.7 0 0 387.7-123.8-0.1-65.2-0.4-47.6-1.2-19.1-1-16.3-1.2-15-1.7-13.6-2-12.2-2.6-10.9-3-9.5-3.6-8.7-4.4-7.6-5-6.8-5.9-5.9-6.7-5-7.5-4.5-8.8-3.6-9.5-3.1-10.9-2.6-12.2-2.1-13.6-1.6-14.9-1.2-16.3-1-19-1.3-47.5-0.4-65.2-0.1-122.1z"/>
<path fill="#4d96ff" d="M0 0l43.5 0 0.5 143.9 1.1 86.9 1 35.3 1.3 28.5 1.6 23.1 2.2 23 2.8 20.4 3.4 17.6 4.1 16.3 5.1 15.2 5.5 12.2 6.8 11.9 4.1 5.7 4 5.1 8.2 8.5 9.8 8 10.7 6.7 10.9 5.5 14 5.4 14.4 4.3 17.6 3.8 16.4 2.8 21.8 2.6 20.4 1.7 25.8 1.6 27.2 1.1 35.4 1 85.7 1 138.7 0.4 0 43.5-544 0 0-541.6zM157 0l387 0 0 386-122.4-0.1-65.3-0.5-47.6-1.2-19-1-16.3-1.3-16.4-1.8-13.6-2.2-12.2-2.7-10.9-3.2-9.5-3.8-8.2-4.3-6.8-4.7-6.8-6-5.4-6.3-5-7.5-4.2-8.2-3.7-9.5-3.2-10.8-2.6-12.3-2.1-13.5-1.8-16.3-1.2-16.3-1-19-1.2-47.5-0.5-65.2-0.1-119.4z"/>
<path fill="#4d9cff" d="M0 0l42.8 0 0.5 146.6 1.1 85.5 0.9 32.6 1.3 28.5 1.6 24.5 2.1 22.4 2.7 20.4 3.4 18.2 4 16.3 5 15 5.3 12.2 6.9 12.2 4 5.8 4.1 5.2 4.1 4.5 4.9 4.9 4.7 4 5.3 4 10.9 6.8 11.3 5.5 13.2 5 14.9 4.4 15 3.3 19 3.1 20.4 2.5 23.2 1.9 24.4 1.5 28.6 1.1 31.3 0.8 84.3 1.1 142.8 0.4 0 42.8-544 0 0-541.6zM158.7 0l385.3 0 0 384.3-119.7-0.1-65.3-0.5-47.6-1.2-19-1-16.3-1.3-16.3-1.8-13.6-2.1-12.3-2.7-10.9-3.2-9.5-3.7-8.2-4.2-8-5.5-6.1-5.4-5.9-6.8-4.6-6.8-4.8-9.5-3.7-9.5-3.1-10.8-2.5-12.3-2.1-13.5-1.7-15-1.2-16.3-1-19-1.3-46.1-0.5-65.2-0.1-119.4z"/>
<path fill="#4da1ff" d="M0 0l42.1 0 0.5 143.9 1.1 88.2 1 35.3 1.3 28.5 1.6 24.1 2.1 22.1 2.8 20.4 3.3 17.6 4 16.4 5.5 16 5.5 12.4 6.7 11.5 7.7 10.2 8.6 9 9.1 7.3 10.6 6.8 10.8 5.4 13.9 5.5 14.1 4.1 17.8 4 17.6 2.9 21.2 2.5 20.9 1.8 25.9 1.6 28.5 1.1 34 0.9 85.7 1 140.1 0.4 0 42.1-544 0 0-541.6zM160.4 0l383.6 0 0 382.6-118.3-0.1-65.3-0.5-47.6-1.3-19-1-16.4-1.3-14.9-1.6-13.6-2.1-12.3-2.6-10.8-3.2-9.6-3.6-8.3-4.2-8-5.3-6.8-5.9-5.6-6.5-5.3-7.7-4.3-8.5-3.7-9.5-3.1-10.9-2.7-12.2-2.1-13.6-1.7-14.9-1.3-16.3-1-19-1.2-46.2-0.6-65.1-0.1-118.1z"/>
<path fill="#4da6ff" d="M0 0l41.4 0 0.5 146.6 1.1 86.9 0.9 32.6 1.3 28.5 1.7 25.8 2.1 22 2.7 20.4 3.4 18.7 4.1 16.2 4.7 14.1 5.5 12.5 6.8 12.1 7.5 10.2 4.7 5.3 4.3 4.2 4.8 4.1 5.3 4.1 10.9 6.8 11.4 5.5 13.6 5.1 14.8 4.3 16.5 3.6 19 3 19.1 2.2 23.1 2 24.5 1.4 28.5 1.1 31.3 0.8 84.3 1 144.2 0.5 0 41.4-544 0 0-541.6zM162.1 0l381.9 0 0 380.9-118.3-0.1-65.3-0.6-46.2-1.3-19.1-1-16.3-1.3-16.3-1.8-13.6-2.3-12.3-2.7-10.8-3.3-9.6-3.9-8.1-4.3-6.8-4.7-6.8-6-5.9-6.9-5-7.6-4.3-8.7-3.6-9.5-3.1-10.8-2.6-12.2-2.1-13.6-1.6-14.9-1.3-16.3-1-19-1.2-46.2-0.6-65.2-0.1-115.3z"/>
<path fill="#4dacff" d="M0 0l40.8 0 0.4 143.9 1.1 88.2 1 35.3 1.2 28.5 1.7 25.8 2 20.4 2.6 20.4 3.5 19 4 16.2 4.4 13.6 5.3 12.6 3.3 6.4 3.5 5.9 7.5 10.4 4.7 5.4 4.1 4.1 9.9 8.2 10.5 6.7 10.9 5.5 13.8 5.4 13.7 4.1 18.2 4.1 16.9 2.7 21.7 2.7 21.8 1.8 25.8 1.5 28.6 1.2 34 0.8 85.7 1 141.4 0.4 0 40.8-544 0 0-541.6zM163.8 0l380.2 0 0 379.2-117-0.1-65.2-0.6-46.3-1.3-19-1-16.3-1.4-15-1.7-13.6-2.1-12.2-2.7-10.9-3.3-9.5-3.7-8.2-4.3-8-5.4-6.1-5.4-5.9-6.8-4.6-6.8-4.9-9.5-3.7-9.5-3.1-10.9-2.6-12.2-2.1-13.6-1.7-14.9-1.3-16.3-1-19-1.3-46.2-0.6-65.1-0.1-114z"/>
<path fill="#4db1ff" d="M0 0l40.1 0 0.5 148 1.1 86.8 0.9 32.6 1.2 28.5 1.7 25.8 2.1 22.3 2.7 20.5 3.4 18.3 4 16.3 4.9 14.5 5.4 12.7 6.8 11.9 7.2 9.8 4.8 5.4 4.2 4.1 9.6 7.8 10.9 6.9 11.5 5.6 13 5 15 4.4 14.9 3.3 19.1 3.1 20.4 2.5 23.1 1.9 24.5 1.5 29.9 1.2 31.3 0.7 85.6 1.1 144.2 0.4 0 40.1-544 0 0-541.6zM165.5 0l378.5 0 0 377.5-114.2-0.1-65.3-0.6-46.3-1.3-19-1-16.3-1.3-15-1.7-13.6-2.1-12.2-2.7-10.9-3.1-9.5-3.7-8.4-4.2-7.9-5.3-6.8-6-5.7-6.4-5.2-7.7-4.4-8.6-3.7-9.5-3.2-10.8-2.7-12.3-2.2-13.5-1.7-15-1.3-16.2-1-19.1-1.3-46.1-0.6-65.2-0.1-112.6z"/>
<path fill="#4db7ff" d="M0 0l39.5 0 0.4 145.3 1.1 88.2 1 35.3 1.2 28.5 1.7 25.6 1.9 20.5 2.6 20.4 3.4 19 4 16.3 4.4 13.6 5.4 12.9 3.2 6.1 3.6 6.2 4.1 6 4.1 5.3 8.2 8.6 9.5 7.8 10.5 6.8 11.2 5.6 13.5 5.3 13.7 4.1 18.3 4 17.1 2.8 21.8 2.6 21.7 1.8 25.9 1.6 27.2 1 35.3 0.9 87.1 1 141.4 0.4 0 39.5-544 0 0-541.6zM167.1 0l376.9 0 0 375.9-112.9-0.2-65.3-0.5-46.2-1.4-19-1-16.4-1.4-14.9-1.7-13.6-2.1-12.3-2.7-10.8-3.2-9.6-3.8-9.5-4.9-6.8-4.7-6.8-6.1-5.4-6.2-5-7.5-4.3-8.1-3.7-9.5-3.3-10.9-2.7-12.2-2.2-13.6-1.7-14.9-1.3-16.3-1.1-19-1.3-46.2-0.6-63.8-0.2-112.6z"/>
<path fill="#4dbcff" d="M0 0l38.9 0 0.4 149.3 1.1 86.9 0.9 32.6 1.2 28.5 1.7 25.8 2 21.9 2.8 20.8 3.3 18.4 4 16.3 4.9 14.7 5.4 12.6 6.8 12 7 9.5 3.9 4.5 5.1 5 4.7 4.1 5.2 4 10.9 6.8 11.2 5.5 13.2 5 15 4.4 15 3.2 19 3.2 20.4 2.4 23.1 1.9 24.5 1.5 28.6 1.1 32.6 0.8 85.7 1 145.5 0.4 0 38.9-544 0 0-541.6zM168.8 0l375.2 0 0 374.2-112.9-0.1-63.9-0.6-46.2-1.4-19.1-1.1-16.3-1.3-15-1.7-13.6-2.3-12.2-2.7-10.9-3.2-9.5-3.8-8.4-4.4-7.9-5.4-6.1-5.5-5.9-6.8-4.6-6.7-4.3-8.2-3.8-9.5-3.3-10.9-2.8-12.2-2.2-13.5-1.7-15-1.4-16.3-1.1-19-1.3-46.1-0.7-63.8-0.1-111.3z"/>
<path fill="#4dc1ff" d="M0 0l38.3 0 0.4 146.6 1.1 88.2 0.9 35.3 1.2 28.5 1.6 24.6 2 21.6 2.8 21.7 3.4 18.5 4.1 16.5 4.5 13.9 5.2 12.2 3.6 6.8 3.2 5.4 3.9 5.7 4 5.2 8.2 8.6 9.3 7.7 10.6 6.8 11.4 5.7 13.4 5.1 13.8 4.1 18.4 4.1 16.9 2.7 21.8 2.6 20.4 1.7 25.8 1.5 28.6 1.2 35.4 0.9 87 0.9 142.8 0.4 0 38.3-544 0 0-541.6zM170.5 0l373.5 0 0 372.5-111.5-0.1-63.9-0.6-46.3-1.4-19-1.1-16.3-1.4-15-1.7-13.6-2.3-12.2-2.7-10.9-3.3-9.5-3.8-8.2-4.3-7.3-5-6.3-5.6-5.9-6.6-5-7.4-4.6-8.9-3.5-9-3.1-10-2.8-12.2-2.2-13.6-1.8-14.9-1.4-16.3-1.1-19-1.4-46.2-0.6-63.8-0.1-109.9z"/>
<path fill="#4dc7ff" d="M0 0l37.7 0 0.4 146.6 1.1 89.6 0.9 33.9 1.2 28.5 1.6 24.5 2 22.4 2.7 21.1 3.4 18.9 4 16.3 4.8 14.8 5.5 12.6 6.8 12 6.9 9.5 4 4.5 4.9 5 4.7 4.1 5.3 4 9.5 6 12.3 6.1 12.2 4.7 13.6 4.1 16.3 3.7 19.1 3.1 21.7 2.6 23.2 2 24.4 1.4 28.6 1.1 32.6 0.8 88.4 1 144.2 0.4 0 37.7-544 0 0-541.6zM172.1 0l371.9 0 0 370.9-110.2-0.2-63.9-0.6-46.2-1.4-19.1-1.1-16.3-1.4-14.9-1.8-13.6-2.3-12.3-2.7-10.9-3.4-9.5-3.9-8.1-4.3-6.8-4.7-6.8-6-5.5-6.2-5.2-7.8-4.3-8.2-3.7-9.5-3.3-10.8-2.7-12.2-2.2-13.6-1.8-14.9-1.3-16.3-1.1-17.7-1.4-46.1-0.6-63.8-0.2-108.6z"/>
<path fill="#4dccff" d="M0 0l37.1 0 0.4 149.3 1.1 88.3 0.9 32.5 1.3 31.1 1.5 23.2 2.1 23.1 2.7 20.4 3.2 18 4.1 16.7 4.6 14.2 5.2 12.2 3.5 6.8 3.3 5.4 3.8 5.6 4.1 5.2 8.1 8.7 9.4 7.6 10.6 6.8 11.3 5.7 13.6 5.2 15 4.3 17.6 3.8 17 2.7 21.1 2.5 20.4 1.7 25.9 1.6 28.5 1.1 35.4 0.8 87 1 144.2 0.4 0 37.1-544 0 0-541.6zM173.8 0l370.2 0 0 369.2-108.8-0.1-63.9-0.7-46.3-1.4-19-1.1-16.3-1.4-15-1.9-13.6-2.2-12.2-2.9-10.5-3.2-9.9-4.1-7.6-4-7.4-5.1-6.4-5.8-5.8-6.7-4.7-6.9-4.2-8.1-3.9-9.5-3.3-10.9-2.7-12.2-2.3-13.6-1.7-14.9-1.4-16.3-1.1-17.6-1.4-46.2-0.7-63.8-0.1-107.2z"/>
<path fill="#4dd1ff" d="M0 0l36.5 0 0.4 148 1.1 89.6 0.9 33.9 1.2 28.5 1.6 24.4 1.9 21.8 2.6 20.8 3.6 19.9 4 16.3 4.7 14.5 5.4 12.7 2.8 5.4 4 6.7 7 9.5 3.9 4.5 5 5.1 4.7 4 5.3 4 9.5 6.1 12.2 6 12.3 4.7 13.6 4 16.4 3.7 18.9 3.2 21.8 2.5 21.7 1.9 24.5 1.4 27.2 1.1 34 0.9 88.4 1 146.9 0.4 0 36.5-544 0 0-541.6zM175.4 0l368.6 0 0 367.6-107.4-0.2-64-0.7-46.2-1.4-17.7-1.1-16.3-1.3-15-1.8-13.6-2.3-12.2-2.7-10.9-3.3-9.5-3.9-8.2-4.3-7.7-5.2-6.1-5.5-6-6.7-4.6-6.9-4.3-8.1-3.9-9.5-3.4-10.8-2.7-12.3-2.3-13.5-1.8-15-1.4-16.3-1.1-17.6-1.4-46.2-0.7-62.4-0.2-107.2z"/>
<path fill="#4dd7ff" d="M0 0l36 0 0.4 150.7 1.1 88.2 0.8 31.2 1.2 29.9 1.6 25.8 2.1 23.1 2.9 21.7 3.2 17.6 4 16.3 5 15 5.6 12.8 6.7 11.6 7 9.5 8.1 8.5 9.4 7.8 10.7 6.8 11.2 5.5 13.9 5.3 14.6 4.2 17.7 3.8 18.1 2.9 20 2.3 21.4 1.8 23.5 1.4 31.2 1.2 32.7 0.8 87 0.9 146.9 0.4 0 36-544 0 0-541.6zM177.1 0l366.9 0 0 365.9-107.4-0.2-62.6-0.6-46.2-1.5-17.7-1.1-16.3-1.4-15-1.8-13.8-2.3-12-2.7-10.9-3.4-9.5-3.9-8.2-4.3-6.8-4.7-6.8-5.9-5.5-6.3-5.4-7.9-4.4-8.4-3.7-9.5-3.3-10.9-2.5-10.8-2.3-13.6-1.8-14.9-1.4-16.3-1.1-17.7-1.5-46.1-0.6-62.5-0.2-105.8z"/>
<path fill="#4ddcff" d="M0 0l35.4 0 0.4 149.3 1 88.3 1 35.3 1.2 28.5 1.6 25.8 2 21.7 2.6 20.3 3.4 19 4 16.3 4.5 14.1 5.6 13.1 6.7 11.9 7.1 9.8 3.7 4.3 5.2 5.2 8.4 7 10.9 7 12.3 6 12.2 4.7 13.6 4 17.4 3.9 18 2.9 21.7 2.6 21.8 1.8 25.8 1.5 28.6 1.1 35.3 0.9 87.1 0.9 145.5 0.4 0 35.4-544 0 0-541.6zM178.7 0l365.3 0 0 364.3-106.1-0.2-62.5-0.7-46.3-1.5-17.7-1.1-16.3-1.4-14.9-1.8-13.6-2.3-12.3-2.8-10.9-3.4-9.5-4-8.1-4.4-6.8-4.7-6.8-6-5.5-6.3-5-7.4-4.3-8.1-3.8-9.6-3.3-10.8-2.8-12.2-2.2-13.6-1.8-14.9-1.4-16.3-1-17.7-1.5-46.1-0.7-62.5-0.2-103.1z"/>
<path fill="#4de2ff" d="M0 0l34.9 0 0.4 152 1 88.3 1 33.9 1.2 28.5 1.6 25.8 2 21.7 2.8 21.2 3.3 18.2 4 16.3 4.9 14.9 5.5 12.5 6.8 11.9 7 9.6 7.9 8.3 4.4 3.9 5.3 4.1 10.7 6.7 11.1 5.5 13.4 5.1 15.3 4.4 16 3.4 19 3.1 20.4 2.3 23.1 1.9 24.5 1.4 28.6 1.1 32.6 0.8 85.7 0.9 149.6 0.4 0 34.9-544 0 0-541.6zM180.4 0l363.6 0 0 362.6-104.7-0.2-62.6-0.7-46.2-1.5-17.7-1.1-16.3-1.4-15-1.9-13.6-2.3-12.2-2.9-10.1-3.1-9-3.6-8.5-4.5-7.8-5.4-6.1-5.5-5.9-6.8-4.6-6.8-4.4-8.1-3.8-9.5-3.4-10.9-2.8-12.2-2.3-13.6-1.8-14.9-1.4-16.3-1-17.6-1.5-46.2-0.7-62.4-0.2-101.8z"/>
<path fill="#4de7ff" d="M0 0l34.3 0 0.4 150.7 1.1 88.2 0.9 36.4 1.3 28.8 1.4 23.5 2.1 22.6 2.8 21.8 3.3 18.2 4.1 16.6 4.6 14 5.9 13.6 6.2 10.9 3.7 5.3 4.1 5.2 8.1 8.5 8.3 6.8 10.8 6.9 10.8 5.5 13.6 5.2 15 4.4 17.3 3.7 18.1 2.9 22.1 2.6 21.4 1.7 25.8 1.5 27.2 1 35.4 0.9 87 0.9 146.9 0.4 0 34.3-544 0 0-541.6zM182 0l362 0 0 361-102-0.2-62.6-0.7-46.2-1.5-17.7-1.1-16.3-1.4-15-1.8-13.6-2.3-12.2-2.8-10-3-9-3.6-8.9-4.6-7.5-5-6.8-5.9-5.9-6.7-4.9-7.2-4.2-7.8-4-9.8-3.3-10.5-2.8-12.2-2.3-13.6-1.8-14.9-1.5-16.3-1-17.7-1.5-44.8-0.8-62.4-0.2-101.8z"/>
<path fill="#4decff" d="M0 0l33.8 0 0.4 150.7 1 89.6 0.9 33.9 1.2 28.5 1.5 24.5 2 22.3 2.7 21.5 3.3 18.6 3.9 16.3 4.8 14.9 5.7 13.4 6.2 11.1 7.4 10.1 8.3 8.9 9.4 7.7 9.5 6.2 12.2 6.1 12.3 4.7 13.6 4.1 16.5 3.7 18.8 3.2 21.8 2.6 23.1 1.9 24.5 1.4 28.6 1.1 32.6 0.8 89.8 1 148.2 0.4 0 33.8-544 0 0-541.6zM183.7 0l360.3 0 0 359.3-102-0.2-62.6-0.7-44.8-1.5-19.1-1.2-15.5-1.4-14.4-1.8-13.6-2.3-12.2-2.8-10.9-3.4-9.5-3.9-8.2-4.4-6.8-4.7-6.8-6-5.4-6.1-5.5-8-4.2-8.2-3.8-9.5-3-9.5-2.8-12.2-2.4-13.6-1.8-14.9-1.5-16.3-1-17.6-1.6-44.8-0.7-61.1-0.2-101.8z"/>
<path fill="#4df2ff" d="M0 0l33.3 0 0.4 152 1 88.3 0.8 32.6 1.3 29.8 1.5 25.8 2.1 23.1 2.6 20.4 3.2 18.2 4.1 16.9 4.9 15.1 5.9 13.6 6.2 10.8 7.5 10.1 8.2 8.6 8.6 7.1 10.6 6.8 10.9 5.4 14.2 5.5 14.1 4.1 17.7 3.8 18.6 2.9 20.9 2.4 20.5 1.7 25.7 1.5 31.3 1.1 32.6 0.8 87.1 0.9 148.2 0.4 0 33.3-544 0 0-541.6zM185.3 0l358.7 0 0 357.7-102-0.3-62.6-0.7-44.8-1.6-17.7-1.1-16.3-1.5-15-1.9-13.6-2.4-10.9-2.6-10.9-3.4-9.5-4-7.8-4.3-7.1-4.9-6.7-5.9-5.6-6.4-4.8-7.2-4.3-8.1-3.9-9.5-3.3-10.8-2.6-11-2.3-13.5-1.9-15-1.4-16.3-1.2-17.6-1.5-44.8-0.7-61.1-0.3-100.4z"/>
<path fill="#4df7ff" d="M0 0l32.8 0 0.4 149.3 0.9 89.6 1 35.3 1.1 28.5 1.6 25.8 1.9 21.7 2.5 20.4 3.5 20.4 4 16.2 4.7 14.8 5.4 12.9 6.6 11.7 7 9.8 4.1 4.6 4.6 4.6 9 7.4 9.5 6.2 10.9 5.5 13.6 5.4 13.6 4.1 18.1 4 17.3 2.8 21.8 2.6 21.7 1.8 25.8 1.5 28.6 1.2 35.4 0.8 88.4 1 148.2 0.3 0 32.8-544 0 0-541.6zM187 0l357 0 0 356-100.6-0.2-61.2-0.8-44.9-1.5-17.7-1.1-16.3-1.5-15-1.9-13.6-2.3-10.9-2.5-10.8-3.4-9.6-3.8-8.1-4.3-8-5.5-6.1-5.5-6-6.8-4.6-6.7-4.3-8.2-4-9.5-3.3-10.9-2.6-10.8-2.4-13.6-1.9-14.9-1.4-16.3-1.2-17.7-1.5-44.8-0.8-61-0.2-99.1z"/>
<path fill="#4dfcff" d="M0 0l32.3 0 0.3 150.7 1.1 90.9 0.9 34 1.1 28.5 1.5 24.4 2.1 23.1 2.5 20.4 3.1 17.9 4.1 17.4 4.7 14.9 5.1 12.2 6.5 11.9 6.9 9.8 4 4.6 4.8 4.9 4.7 4.2 5.1 4 9.8 6.3 11.9 5.9 12.6 4.8 15 4.4 16.3 3.6 19 3 20.4 2.4 23.2 1.9 24.4 1.4 30 1.1 32.6 0.8 89.8 1 148.2 0.3 0 32.3-544 0 0-541.6zM188.7 0l355.3 0 0 354.3-99.3-0.2-61.2-0.8-44.9-1.5-17.6-1.1-16.4-1.5-14.9-1.9-13.6-2.4-11.9-2.8-9.9-3.1-9.5-3.9-8.2-4.4-7.1-4.9-6.5-5.7-5.7-6.5-5.1-7.4-4.1-7.7-3.9-9.4-3-9.5-3-12.2-2.4-13.5-1.9-15-1.5-16.3-1.2-17.6-1.5-44.8-0.8-61.1-0.2-97.7z"/>
<path fill="#4ffffc" d="M0 0l31.8 0 0.4 152 0.9 88.3 0.9 34 1.3 31.1 1.4 23.8 2 22.4 2.7 21.7 3.3 19 3.9 16.3 4.4 13.8 5.5 13 6.1 11.2 3.6 5.4 3.9 5.2 8.1 8.8 9.3 7.8 10.5 6.8 11.5 5.7 13.3 5.1 13.9 4.1 17.7 3.9 18 2.9 21.4 2.5 20.4 1.7 25.9 1.5 28.6 1.1 35.3 0.8 88.4 1 149.6 0.3 0 31.8-544 0 0-541.6zM190.3 0l353.7 0 0 352.7-97.9-0.3-61.2-0.7-44.9-1.6-17.7-1.1-16.3-1.5-15-2-13.6-2.4-10.8-2.6-10.9-3.4-9.5-3.9-8.2-4.4-6.8-4.7-6.8-6.1-5.4-6.2-5.3-7.7-4.3-8.2-3.9-9.5-2.9-9.5-2.9-12.2-2.4-13.6-1.8-14.9-1.5-16.3-1.1-17.6-1.5-43.5-0.8-59.7-0.3-97.7z"/>
<path fill="#55fff7" d="M0 0l31.3 0 0.4 150.7 0.9 89.6 0.9 35.3 1.2 28.5 1.5 25.8 1.9 21.7 2.7 21.7 3.3 19 3.9 16.3 4.7 14.9 5.8 13.6 6 10.9 3.5 5.1 4.1 5.3 8 8.6 4.7 4.1 5 3.8 9.5 6.1 12.2 6.1 12.3 4.7 13.6 4 16.7 3.8 18.6 3 21.8 2.6 21.7 1.8 25.9 1.5 28.5 1.1 35.3 0.8 88.5 1 149.6 0.3 0 31.3-544 0 0-541.6zM192 0l352 0 0 351-97.9-0.3-59.9-0.7-44.8-1.6-17.7-1.2-16.3-1.5-15-1.9-13.6-2.4-10.9-2.7-10.8-3.4-9.6-4-7.6-4.1-7.3-5.1-6.5-5.8-5.8-6.7-4.7-6.9-4.3-8.1-3.9-9.5-3.4-10.9-2.5-10.8-2.4-13.6-1.9-15-1.5-16.2-1.1-17.7-1.6-43.4-0.7-59.8-0.3-96.3z"/>
<path fill="#5afff2" d="M0 0l30.8 0 0.4 154.8 1 88.2 0.8 32.6 1.2 29.8 1.5 24.5 2 23.1 2.7 21.7 3.1 17.8 3.8 16.1 4.4 14 5.4 13.3 6.6 12.1 7 9.9 4.1 4.8 4.2 4.3 4.6 4.1 5.2 4 10.5 6.7 11 5.5 13.5 5.2 15 4.3 16.2 3.5 19.1 3.1 20.4 2.3 24.4 2 24.5 1.4 28.6 1 32.6 0.8 87.1 0.9 152.3 0.4 0 30.8-544 0 0-541.6zM193.7 0l350.3 0 0 349.3-96.6-0.2-59.8-0.8-43.5-1.6-17.7-1.1-16.3-1.5-15-1.9-13.6-2.3-10.9-2.6-10.8-3.4-9.6-3.9-8.1-4.3-7.8-5.3-6.1-5.5-6-6.7-4.6-6.8-4.4-8.2-4-9.5-3.4-10.8-2.5-10.9-2.5-13.6-1.9-14.9-1.5-16.3-1.1-17.6-1.6-43.5-0.8-59.7-0.2-95z"/>
<path fill="#5fffec" d="M0 0l30.3 0 0.4 152 1 89.6 0.9 36.7 1.2 28.5 1.6 25.7 1.8 20.5 2.7 21.7 3.3 19 3.8 16.3 4.7 14.6 5.4 12.9 6.6 11.8 7 9.8 8.2 8.8 8.7 7.2 10.3 6.8 10.9 5.5 13.8 5.4 14.8 4.3 17.5 3.8 17.8 2.9 22.5 2.5 21 1.7 25.9 1.5 28.5 1.1 35.4 0.8 88.4 0.9 149.6 0.4 0 30.3-544 0 0-541.6zM195.3 0l348.7 0 0 347.7-95.2-0.3-59.8-0.8-43.6-1.6-17.6-1.1-16.4-1.5-14.9-1.9-13.6-2.4-11.6-2.8-10.2-3.2-9.5-4-8.2-4.3-6.9-4.8-6.7-5.9-5.6-6.3-5.2-7.7-4.6-8.6-3.6-8.9-3.1-10.1-2.9-12.2-2.2-12.2-1.9-15-1.6-16.3-1.1-17.6-1.6-43.4-0.8-59.8-0.3-93.6z"/>
<path fill="#65ffe7" d="M0 0l29.8 0 0.4 153.4 1.1 91 0.8 33.9 1.2 28.5 1.6 25.8 1.8 21.3 2.7 21.8 3.2 18 3.8 16.3 4.7 14.9 5.1 12.2 6.4 11.8 7 9.9 3.8 4.6 4.9 4.9 4.7 4.2 5.2 4 9.7 6.2 12.1 6 12.4 4.7 13.6 4 16.3 3.6 19.1 3.1 21.7 2.6 21.8 1.8 24.5 1.4 28.5 1.1 34 0.8 89.8 1 152.3 0.4 0 29.8-544 0 0-541.6zM197 0l347 0 0 346-95.2-0.3-59.8-0.8-43.6-1.7-17.6-1.1-16.4-1.6-14.9-2-12.3-2.2-10.8-2.6-10.9-3.5-9.5-4-8.2-4.4-6.8-4.7-6.8-6.1-5.4-6.2-5.2-7.5-4.3-8.2-3.8-9.5-3.1-9.6-2.8-12.1-2.2-12.2-2-14.9-1.5-16.3-1.2-17.7-1.6-43.4-0.8-58.4-0.3-93.6z"/>
<path fill="#6affe1" d="M0 0l29.4 0 0.4 154.8 1 88.2 0.8 32.6 1.1 29.8 1.5 25.8 2 23.1 2.7 21.7 3.3 18.6 3.9 16.7 4.2 13.3 5.5 13.2 6.2 11.5 3.6 5.5 3.8 4.9 8.1 8.9 9.5 7.9 10.5 6.8 11.3 5.6 13.6 5.2 14.4 4.1 16.9 3.7 19 3 20.4 2.3 23.1 1.9 24.2 1.3 30.2 1.1 32.7 0.8 88.4 0.9 152.3 0.4 0 29.4-544 0 0-541.6zM198.7 0l345.3 0 0 344.3-93.8-0.3-58.5-0.8-43.5-1.6-17.7-1.2-16.3-1.5-15-2-13.6-2.4-10.9-2.7-10.4-3.3-9.8-4.1-7.5-4-7.6-5.4-6.2-5.5-6-6.8-4.6-6.8-4.4-8.1-3.9-9.5-3.4-10.9-2.6-10.8-2.2-12.3-1.9-14.9-1.5-14.9-1.2-17.7-1.7-43.4-0.8-58.4-0.3-93.6z"/>
<path fill="#6fffdc" d="M0 0l28.9 0 0.4 153.4 1 89.6 0.9 36.6 1.2 28.6 1.5 25.7 1.8 20.4 2.5 20.4 3.5 20.3 3.8 16.3 4.7 15 5.6 13 6.2 11.4 7.4 10.1 8.1 8.8 8.3 6.9 10.8 7 10.8 5.5 13.6 5.3 15 4.3 16.8 3.7 18.6 2.9 21.6 2.5 21.9 1.8 25.8 1.4 28.6 1.1 35.3 0.8 88.4 0.9 151 0.4 0 28.9-544 0 0-541.6zM200.4 0l343.6 0 0 342.6-93.8-0.3-58.5-0.8-43.5-1.7-17.7-1.2-15-1.4-14.1-1.9-13.1-2.3-12.2-3-9.5-3-9.5-3.9-8.2-4.4-7.4-5.1-6.2-5.5-5.5-6-5.2-7.5-4.4-8.2-4-9.3-3.1-9.7-3-12.2-2.2-12.2-2-14.9-1.4-15-1.3-17.6-1.6-43.5-0.9-58.3-0.3-92.3z"/>
<path fill="#75ffd7" d="M0 0l28.5 0 0.4 154.8 1 90.9 0.8 33.9 1.2 28.6 1.5 25.7 1.9 21.8 2.7 21.7 3.1 17.6 3.8 16.3 4.7 15 5 12.2 3.5 6.8 3.1 5.3 6.8 9.7 4.1 4.7 4.5 4.7 4.6 4.1 5.3 4 10.1 6.5 11.7 5.8 12.7 4.8 15 4.3 15 3.3 19 3.1 21.8 2.5 23.1 1.9 24.5 1.3 28.5 1.1 34 0.8 89.8 1 152.3 0.3 0 28.5-544 0 0-541.6zM202.1 0l341.9 0 0 340.9-92.5-0.3-58.5-0.9-43.5-1.6-17.7-1.3-14.9-1.4-15-2-12.2-2.2-11-2.7-10.8-3.4-9.5-3.9-8.2-4.5-6.8-4.7-6.8-6-5.4-6.1-5.4-8-4.1-7.7-3.6-8.6-3.2-9.8-2.9-11.9-2.3-12.3-2-14.9-1.5-14.9-1.2-17.7-1.7-43.4-0.9-58.4-0.3-90.9z"/>
<path fill="#7affd1" d="M0 0l28 0 0.4 156.1 1 88.3 0.8 32.5 1.1 29.9 1.6 25.8 1.9 23.1 2.7 21.7 3.3 19 3.9 16.3 4.3 13.6 5.4 13.2 6 11.2 3.6 5.4 4 5.3 8.2 8.8 9.1 7.6 10.5 6.8 11.6 5.8 13.5 5.1 14.1 4.1 17.3 3.7 19.1 3 20.4 2.3 22.5 1.8 24.3 1.4 30.7 1.1 32.6 0.8 88.4 0.9 153.7 0.4 0 28-544 0 0-541.6zM203.8 0l340.2 0 0 339.2-91.1-0.3-58.5-0.9-43.5-1.7-17.7-1.2-15-1.5-14.9-2-12.3-2.3-10.8-2.6-10.9-3.5-9.5-4-7.9-4.3-7.1-4.9-6.6-5.9-5.6-6.5-4.9-7.1-4.3-8.1-4-9.5-3.2-10.2-2.7-11.6-2.2-12.2-2-14.9-1.5-14.9-1.2-17.7-1.6-43.4-0.9-57-0.3-89.6z"/>
<path fill="#80ffcc" d="M0 0l27.6 0 0.4 153.4 0.9 89.6 0.9 36.6 1.1 28.6 1.6 25.7 1.8 21.8 2.5 20.3 3.5 20.4 3.8 16.3 4.7 14.9 5.6 13.4 6.1 11 3.4 5.1 4.1 5.3 8.1 8.7 4.6 4 5 3.8 9.5 6.1 12.2 6.1 12.3 4.6 13.6 4 17.8 3.9 17.5 2.8 22.7 2.7 22.2 1.7 25.9 1.5 28.5 1 35.4 0.8 88.4 0.9 152.3 0.4 0 27.6-544 0 0-541.6zM205.5 0l338.5 0 0 337.5-89.8-0.3-58.4-0.9-43.6-1.7-17.6-1.3-15-1.5-14.5-1.9-12.7-2.4-12.2-3-9.6-3.2-8.7-3.6-7.6-4.1-7.8-5.4-6.2-5.5-5.9-6.8-4.7-6.8-4.4-8.1-4-9.5-3.4-10.9-2.6-10.8-2.2-12.2-2-15-1.5-14.9-1.2-17.7-1.7-42-0.9-57-0.3-89.6z"/>
<path fill="#85ffc7" d="M0 0l27.2 0 0.3 156.1 1 91 0.9 33.9 1.1 28.5 1.6 25.8 1.9 21.7 2.7 21.7 3 17.7 3.8 16.4 4.6 14.8 5.1 12.2 3.4 6.8 3.2 5.6 6.8 9.6 4.1 4.8 4.4 4.5 4.6 4 5.2 4.1 10.3 6.6 11.5 5.6 13 4.9 14.9 4.3 16.4 3.5 19 3 20.4 2.4 23.1 1.8 24.5 1.4 28.6 1 34 0.8 89.7 1 153.7 0.3 0 27.2-544 0 0-541.6zM207.2 0l336.8 0 0 335.8-89.8-0.4-57.1-0.8-43.5-1.8-17.7-1.2-14.9-1.5-13.6-1.9-13.2-2.4-11-2.7-9.8-3.1-9.6-4-8.1-4.4-7-4.8-6.6-5.9-5.7-6.3-5.2-7.6-4.1-7.6-3.9-9.3-3.1-9.5-3-12.2-2.2-12.2-2.1-14.9-1.4-15-1.3-17.6-1.7-42.1-0.8-57-0.4-88.2z"/>
<path fill="#8affc1" d="M0 0l26.7 0 0.4 156.1 1 89.6 0.8 32.6 1.1 29.9 1.5 25.7 2 23.1 2.7 21.7 3.2 19 3.9 16.3 4.3 13.9 5.5 13.3 2.8 5.4 3.9 6.8 6.9 9.5 8.1 8.8 9 7.5 10.5 6.8 11.8 5.8 13.3 5 14.1 4.1 17.5 3.8 19 2.9 20.4 2.3 23 1.9 24.6 1.3 29.9 1.1 32.7 0.8 88.4 0.9 155 0.4 0 26.7-544 0 0-541.6zM208.9 0l335.1 0 0 334.1-89.8-0.4-57.1-0.9-42.1-1.7-17.7-1.3-15-1.5-14.9-2.1-12.3-2.3-10.9-2.8-10.5-3.4-8.5-3.7-8.3-4.5-6.7-4.7-6.8-6-5.4-6.2-5.1-7.5-4.4-8.2-3.9-9.5-3-9.5-2.6-10.8-2.3-12.3-2.1-14.9-1.5-14.9-1.2-17.7-1.7-42-0.9-57.1-0.4-86.8z"/>
<path fill="#90ffbc" d="M0 0l26.3 0 0.4 154.8 0.9 89.6 0.9 36.6 1.1 28.5 1.6 25.8 1.8 21.7 2.5 20.4 3.4 20.3 3.8 16.3 4.7 15 5.6 13.4 6.1 11 3.5 5.2 4 5.3 8 8.5 4.6 4.1 5.1 3.9 9.5 6 12.3 6.1 12.2 4.6 15 4.3 16.5 3.6 17.5 2.8 23 2.6 21.9 1.8 25.8 1.4 28.6 1 35.3 0.8 88.4 0.9 153.7 0.4 0 26.3-544 0 0-541.6zM210.7 0l333.3 0 0 332.3-87-0.3-57.2-0.9-42.1-1.7-17.7-1.3-15-1.5-14.9-2-12.3-2.3-10.8-2.7-10.9-3.5-9.2-3.9-7.5-4-7.8-5.5-6.1-5.4-5.9-6.8-4.7-6.8-4.4-8.1-3.4-8.2-3.6-10.8-2.7-10.9-2.3-12.2-2.1-14.9-1.5-15-1.2-17.6-1.8-42.1-0.9-57-0.3-85.5z"/>
<path fill="#95ffb6" d="M0 0l25.9 0 0.4 154.8 0.9 90.6 0.9 35.6 1.1 28.5 1.5 25.8 1.9 22.8 2.7 22 3.1 17.6 3.8 16.4 4.6 14.9 5 12.2 3.4 6.8 3.3 5.6 6.8 9.6 4.1 4.8 4.3 4.4 4.5 4.1 5.3 4.1 10.3 6.6 11.5 5.6 13 4.9 15 4.3 16.3 3.5 19 3 20.4 2.3 23.2 1.8 24.4 1.4 28.6 1 35.1 0.8 90 1 153.7 0.3 0 25.9-544 0 0-541.6zM212.4 0l331.6 0 0 330.6-87-0.4-55.8-0.9-42.2-1.7-17.6-1.3-15-1.5-15-2-12.2-2.3-10.9-2.7-9.5-3.1-9.5-3.9-8.2-4.4-7.2-5-6.4-5.6-5.8-6.7-5.1-7.2-4.1-7.7-4-9.5-3.5-10.8-2.6-10.9-2.3-12.2-1.9-13.6-1.5-14.9-1.3-17.7-1.7-42.1-0.9-55.6-0.4-85.5z"/>
<path fill="#9affb1" d="M0 0l25.5 0 0.3 157 1 90.1 0.8 32.5 1.1 29.9 1.5 25.8 2 23.1 2.7 21.7 3.2 18.8 3.8 16.5 4.3 13.8 5.6 13.3 2.7 5.5 4 6.8 6.8 9.5 8.1 8.8 9 7.5 10.5 6.7 11.8 5.9 13.4 5 14.2 4.1 17.3 3.7 19 2.9 20.4 2.3 24.2 1.9 24.8 1.4 29.9 1 32.7 0.8 91.1 0.9 152.3 0.3 0 25.5-544 0 0-541.6zM214.2 0l329.8 0 0 328.8-85.7-0.3-57.1-1-41.2-1.7-17.3-1.3-14.9-1.5-15-2.1-12.2-2.3-10.9-2.7-10.9-3.6-9.4-4.1-7.3-4.1-7.6-5.5-5.6-5.1-5.5-6.1-5.3-7.8-4.2-7.9-3.5-8.3-3.3-10.1-2.7-10.9-2.4-13-1.9-13.6-1.6-14.9-1.2-16.3-1.8-42.1-1-55.6-0.3-85.5z"/>
<path fill="#a0ffac" d="M0 0l25.1 0 0.3 156.1 1 89.6 0.8 35 1.2 30.2 1.5 26.3 1.8 21.2 2.5 20.3 3.4 20.4 3.8 16.3 4.7 14.9 5.6 13.4 6 11.1 3.7 5.4 3.9 5 8 8.6 4.6 4 5.1 3.9 9.5 6.1 12.2 6 12.3 4.6 14.9 4.3 16.9 3.6 18.5 2.9 22.6 2.6 20.9 1.6 25.8 1.4 28.6 1.1 36.7 0.8 88.4 0.9 153.7 0.3 0 25.1-544 0 0-541.6zM215.9 0l328.1 0 0 327.1-85.7-0.4-55.7-0.9-40.8-1.8-17.7-1.3-15-1.5-13.6-1.9-12.2-2.3-10.9-2.7-10.9-3.5-9.5-4-7.4-4.1-7.6-5.2-6.2-5.6-5.9-6.8-4.7-6.8-4.4-8.2-3.9-9.5-3.4-10.6-2.7-11.1-2.2-12.2-1.9-13.6-1.5-14.9-1.2-17.1-1.8-41.3-0.9-55.6-0.4-82.8z"/>
<path fill="#a5ffa6" d="M0 0l24.7 0 0.3 154.8 0.9 90.9 0.9 36.7 1.1 28.5 1.5 25.8 1.9 21.7 2.6 21.7 2.8 17.1 4.1 18 4.2 13.8 5.5 13.5 2.7 5.5 3.8 6.8 6.9 9.7 4.1 4.8 4.4 4.5 4.5 4 5.3 4.1 10.3 6.6 11.5 5.6 13 4.9 13.6 3.9 16.3 3.6 19 3 21.8 2.5 21.7 1.8 25.9 1.4 29.9 1.1 35.4 0.8 89.7 0.9 153.7 0.3 0 24.7-544 0 0-541.6zM217.7 0l326.3 0 0 325.3-84.3-0.4-55.8-0.9-42.1-1.9-16.4-1.2-14.9-1.5-13.6-2-13.1-2.5-11.4-2.9-9.5-3.1-8.2-3.5-8.1-4.4-7.4-5.1-6.2-5.5-5.5-6-5.2-7.5-4.3-7.8-3.7-8.5-3.2-9.5-2.8-10.8-2.5-13-2.1-14.2-1.6-14.9-1.3-17.7-1.7-40.7-1-55.6-0.4-82.8z"/>
<path fill="#aaffa1" d="M0 0l24.3 0 0.4 171 0.5 54.3 0.8 42.1 1.2 36.6 1.6 29.9 2.4 28.6 2.8 21.6 2.7 15.7 3.3 14.2 3.5 12.3 4.6 12.2 4.9 10.5 5.5 9.1 6.6 8.9 7 7.3 9.1 7.6 10.5 6.8 11.7 5.7 13.6 5.2 14.3 4 16.9 3.6 19.1 3 20.4 2.3 23.1 1.8 24.5 1.3 28.5 1.1 34 0.8 91.2 0.9 155 0.3 0 24.3-544 0 0-541.6zM219.5 0l324.5 0 0 323.5-84.3-0.4-54.4-0.9-41.5-1.8-17-1.3-15-1.6-13.6-1.9-12.2-2.4-10.9-2.7-10.9-3.6-9.5-4.2-7.2-4.1-7.6-5.4-5.6-5-5.4-6.2-5.4-7.8-4.1-7.8-3.6-8.5-3.1-9.5-2.9-11.1-2.5-13.3-1.9-13.6-1.5-14.9-1.3-16.3-1.8-40.7-0.9-54.3-0.4-82.8z"/>
<path fill="#b0ff9c" d="M0 0l23.9 0 0.4 176.5 0.6 52.9 0.8 42.1 1.3 36.7 1.6 28.5 2.3 27.1 2.8 21.7 2.9 16.3 2.8 12.2 4 13.6 4.2 11.2 5.4 11.4 5.5 9 6.8 8.9 6.7 7 8.2 6.9 5.5 3.8 5.4 3.2 10.9 5.5 13.6 5.2 15 4.3 17.6 3.7 17.7 2.8 23.1 2.5 20.4 1.6 25.9 1.5 31.3 1.1 34 0.7 88.4 0.9 155 0.3 0 23.9-544 0 0-541.6zM221.3 0l322.7 0 0 321.7-83-0.4-54.4-0.9-40.8-1.8-17.6-1.4-15-1.6-13.6-1.9-12.2-2.4-10.9-2.7-9.5-3.2-9.5-4-7.5-4.1-7.5-5.3-6.3-5.6-5.9-6.8-4.7-6.7-4.4-8.2-3.4-8.1-3.6-10.9-2.7-10.9-2.3-12.2-1.9-13.5-1.6-15-1.2-16.3-1.8-40.7-1-54.3-0.4-81.4z"/>
<path fill="#b5ff96" d="M0 0l23.5 0 0.4 173.8 0.6 54.3 0.7 40.7 1.2 35.3 1.7 31.2 2.1 25.8 2.9 23.1 2.8 16.3 3.4 14.9 4 13.6 4.1 10.8 5.3 10.9 5.8 9.5 6.2 8.1 6.5 6.8 9 7.6 9.6 6.2 10.8 5.6 13.6 5.3 13.6 4 17.7 3.9 19.1 3 21.7 2.5 21.8 1.8 25.8 1.4 28.6 1.1 36.7 0.8 89.8 0.9 155 0.3 0 23.5-544 0 0-541.6zM223.1 0l320.9 0 0 319.9-81.6-0.4-54.4-0.9-40.8-1.8-16.3-1.3-15-1.6-13.6-1.9-13.1-2.5-11.4-2.9-9.5-3.2-8.1-3.4-8.2-4.4-7.3-5.1-6.3-5.5-5.4-6.1-5.3-7.4-4.3-7.8-3.6-8.5-3.2-9.5-2.9-10.9-2.5-12.8-2.1-14.3-1.6-14.9-1.2-16.3-1.8-40.7-1-54.4-0.4-80z"/>
<path fill="#bbff91" d="M0 0l23.1 0 0.4 172.4 0.5 54.3 0.8 42.1 1.2 35.3 1.6 31.2 2.3 27.2 2.7 21.9 2.8 15.9 3 13.7 3.8 13.2 4.1 11.3 5 10.8 5.8 9.9 6.8 9.1 6.8 7.2 9.3 7.8 10.6 6.8 11.4 5.6 13.6 5.1 15 4.2 16.3 3.4 19 3 20.4 2.3 23.1 1.8 24.5 1.3 28.6 1.1 34 0.8 91.1 0.9 156.4 0.3 0 23.1-544 0 0-541.6zM224.9 0l319.1 0 0 318.1-80.2-0.4-54.4-1-40.8-1.8-16.4-1.3-14.9-1.5-13.6-2-12.3-2.3-10.8-2.8-10.9-3.6-9.4-4.1-7.3-4.1-7.6-5.4-5.6-5.2-5.5-6.2-5.2-7.6-4.3-8-3.5-8.3-3.2-9.5-2.7-10.9-2.4-12.2-2-13.6-1.6-14.9-1.3-16.3-1.8-40.7-1-53-0.4-80z"/>
<path fill="#c0ff8c" d="M0 0l22.7 0 0.4 173.8 0.6 54.3 0.8 43.1 1.2 37 1.6 28.5 2.3 27.1 2.8 21.7 2.8 16.3 2.9 12.9 4.1 14.1 4.1 11 5.1 10.9 5.7 9.5 6.8 9 6.8 7.1 8.3 7 10.8 6.9 10.8 5.5 13.8 5.2 14.8 4.3 17.7 3.7 18.6 2.9 22.2 2.4 20.9 1.6 25.3 1.4 31.3 1.1 34 0.8 88.4 0.9 156.4 0.3 0 22.7-544 0 0-541.6zM226.7 0l317.3 0 0 316.3-80.2-0.4-53.1-1-40.8-1.9-16.3-1.2-15-1.6-13.6-2-12.2-2.4-10.9-2.8-9.5-3.1-9.3-4-7.4-4-7.8-5.5-6.1-5.4-5.9-6.8-4.7-6.8-4.4-8.1-3.5-8.2-3.2-9.5-2.8-10.8-2.4-12.2-2-13.6-1.6-15-1.3-16.2-1.8-39.4-1.1-53-0.4-80z"/>
<path fill="#c5ff86" d="M0 0l22.3 0 0.5 173.8 0.4 51.5 0.8 43.5 1.2 36.6 1.7 31.3 2 24.4 2.8 23.1 2.7 16.3 3.4 14.9 3.4 12.2 4.5 12.2 4.6 10 5.5 9.4 6.6 9.1 7 7.5 8.7 7.5 10.3 6.8 10.9 5.5 13.6 5.3 14.9 4.4 17.4 3.8 18 2.8 22.8 2.6 22.1 1.7 25.8 1.4 28.6 1.1 35.3 0.8 89.8 0.8 156.4 0.4 0 22.3-544 0 0-541.6zM228.5 0l315.5 0 0 314.5-80.2-0.5-53.1-1-39.4-1.8-16.3-1.3-15-1.6-13.6-2-12.2-2.4-10.9-2.9-9.5-3.2-8.2-3.4-8.2-4.5-7-4.8-6.6-5.8-5.4-6.1-5-7.1-4.5-8.2-3.5-8.1-3.3-9.5-2.8-10.9-2.5-12.2-2-13.6-1.6-14.9-1.3-16.3-1.9-39.4-1-52.9-0.5-78.7z"/>
<path fill="#cbff81" d="M0 0l21.9 0 0.5 173.8 0.5 54.3 0.7 40.7 1.2 35.3 1.6 31.2 2.2 26.6 2.7 22.5 2.7 16.1 2.9 13.5 3.9 13.9 4.3 11.9 5.1 10.9 5.6 9.6 6.8 9.1 6.6 7.1 4.6 4.1 5.1 4 9.5 6.1 12.2 6.1 12.3 4.7 14.9 4.3 16.4 3.5 19 3.1 21.8 2.4 21.7 1.7 25.9 1.5 29.9 1 35.3 0.8 91.2 0.9 155 0.4 0 21.9-544 0 0-541.6zM230.4 0l313.6 0 0 312.6-78.9-0.4-53-1.1-39.5-1.8-16.3-1.3-14.9-1.7-13.6-2-12.3-2.4-10.9-2.9-9.5-3.2-8.9-3.9-7.4-4.1-6.8-4.8-6.8-6.1-5.4-6.2-5.1-7.3-4.3-8.2-3.5-8.1-3.2-9.5-2.7-10.9-2.4-12.2-2-13.6-1.6-14.9-1.3-16.3-1.8-39.4-1.1-51.6-0.4-77.3z"/>
<path fill="#d0ff7b" d="M0 0l21.6 0 0.4 171 0.5 54.3 0.7 42.1 1.2 36.7 1.5 29.8 2.2 27.2 2.7 23.1 2.7 16.3 3.2 14.7 3.9 13.8 4.3 11.6 4.7 10.1 5.5 9.5 6.1 8.4 7.2 7.9 4.5 4.1 5.1 4 10.4 6.7 11 5.5 13.5 5.2 15.2 4.3 16.1 3.5 19 3 20.4 2.3 23.1 1.8 25.9 1.5 28.5 1 34 0.8 92.5 0.9 156.4 0.3 0 21.6-544 0 0-541.6zM232.2 0l311.8 0 0 310.8-77.5-0.5-51.7-1-39.4-1.8-16.4-1.3-14.9-1.6-13.6-2-12.3-2.4-10.8-2.8-9.6-3.2-8.7-3.7-7.6-4.1-7.7-5.4-6.2-5.4-6-6.8-4.6-6.6-4-7.4-4-9.1-3.2-9.5-2.9-10.9-2.4-12.2-2-13.5-1.5-13.6-1.3-16.3-1.9-39.4-1.1-52.9-0.5-76z"/>
<path fill="#d5ff76" d="M0 0l21.2 0 0.4 175.1 0.5 53 0.8 42 1.2 36.7 1.6 29.9 2.1 25.8 2.6 21.7 2.7 16.3 3.2 14.9 3.4 12.2 4.3 12.2 5 10.9 5.4 9.5 6.8 9.3 6.8 7.4 9.1 7.7 10.4 6.8 10.7 5.4 14 5.5 14.3 4.1 18.6 4 18.1 2.8 21.8 2.4 20.4 1.7 25.8 1.4 31.3 1.1 34 0.8 89.7 0.9 157.8 0.3 0 21.2-544 0 0-541.6zM234.1 0l309.9 0 0 308.9-76.2-0.5-51.6-1-39.5-1.8-16.3-1.3-15-1.7-13.6-2-12.2-2.4-10.9-2.9-9.5-3.2-8.2-3.5-8.1-4.4-6.8-4.8-6.8-6-5.3-6-4.8-6.8-4.6-8.1-3.5-8.2-3.3-9.5-2.8-10.8-2.5-12.2-2-13.6-1.6-13.6-1.3-16.3-1.9-39.3-1.1-51.6-0.5-76z"/>
<path fill="#dbff71" d="M0 0l20.8 0 0.5 173.8 0.5 53.5 0.7 41.5 1.1 35.3 1.6 31.2 2 25.4 2.7 23.3 2.7 16.5 2.9 13.5 3.9 14.4 4.1 11.5 5.5 11.9 5.4 9.4 6.3 8.5 7.3 7.9 8.2 7 5.4 3.8 5.4 3.4 12.3 6.1 12.2 4.7 13.6 4 17.6 3.8 17.8 2.9 23.1 2.6 21.8 1.8 25.8 1.4 28.6 1 36.7 0.8 89.7 0.9 157.8 0.4 0 20.8-544 0 0-541.6zM236 0l308 0 0 307-76.2-0.5-51.6-1-39.5-2-16.3-1.3-13.6-1.5-13.6-2.1-12.2-2.5-10.9-2.8-9.5-3.3-8.2-3.6-8.2-4.5-6.8-4.8-6.2-5.6-4.9-5.4-5.2-7.3-4.3-7.7-3.8-8.8-3.1-8.8-2.9-10.9-2.5-12.2-2.1-13.6-1.5-13.5-1.4-16.3-1.9-39.4-1.1-51.6-0.5-74.6z"/>
<path fill="#e0ff6b" d="M0 0l20.5 0 0.4 173.8 0.5 54.3 0.8 42 1.1 35.3 1.6 31.3 2.2 27.1 2.6 21.7 2.7 16.3 3 13.7 4 14.5 4.1 11.2 5 10.8 5.5 9.6 5.9 8.1 7.5 8.1 4.7 4.2 5 4 9.9 6.4 11.7 5.8 12.8 4.9 15 4.3 16.3 3.5 19 3 21.8 2.4 23.1 1.8 24.5 1.4 28.6 1 35.3 0.8 91.1 0.9 157.8 0.3 0 20.5-544 0 0-541.6zM237.9 0l306.1 0 0 305.1-74.8-0.5-51.7-1.1-39.4-1.9-16.3-1.4-13.6-1.5-12.3-1.9-12.2-2.4-10.9-2.8-9.5-3.2-8.2-3.5-8.1-4.4-7.1-4.9-6.5-5.8-5.5-6.1-5-7.1-4.5-8.1-3.6-8.2-3.2-9.5-2.9-10.9-2.4-12.2-1.9-12.2-1.6-13.6-1.3-16.3-2-39.4-1.1-51.5-0.5-73.3z"/>
<path fill="#e6ff66" d="M0 0l20.1 0 0.4 172.4 1.3 96.5 1.1 37.9 1.6 29.6 2.1 26.1 2.5 21.7 2.9 17.6 3.2 15 3.9 13.5 3.9 10.9 4.6 10.2 5.8 10.2 6.4 8.8 6.8 7.4 4.5 4.1 5.1 4.1 10.5 6.8 11.2 5.6 13.6 5.2 14.4 4.1 16.9 3.6 19 3 20.4 2.3 23.2 1.8 25.8 1.4 29.9 1.1 32.7 0.7 92.4 0.9 157.8 0.4 0 20.1-544 0 0-541.6zM239.8 0l304.2 0 0 303.2-73.4-0.5-51.7-1.1-39.5-2-16.3-1.4-13.6-1.5-13.5-2.1-11-2.3-10.8-2.8-9.6-3.3-8.8-3.8-7.5-4.2-6.8-4.8-6.7-6-5.5-6.3-5-7.2-4.4-8.2-3.4-8.1-3.2-9.5-2.8-10.9-2.4-12.2-1.9-12.2-1.5-13.6-1.4-16.3-1.9-38-1.1-50.2-0.5-73.3z"/>
<path fill="#ebff61" d="M0 0l19.8 0 0.4 173.8 1.2 95 1.1 36.6 1.5 29.9 2 25.8 2.7 23.1 2.6 16.2 3.1 15 3.7 13.4 4.3 12.4 5.2 11.4 5.4 9.4 6.7 9.1 6.9 7.5 8.7 7.4 10.3 6.8 11 5.5 13.6 5.3 14.9 4.4 17.7 3.8 17.7 2.7 23.1 2.6 21.8 1.7 25.8 1.4 30.1 1.1 35.2 0.7 89.7 0.9 157.8 0.3 0 19.8-544 0 0-541.6zM241.7 0l302.3 0 0 301.3-73.4-0.6-50.4-1.1-38-1.9-16.4-1.3-13.6-1.6-13.6-2-11.2-2.3-10.5-2.7-9.5-3.2-8.4-3.6-8-4.3-7.5-5.2-6.1-5.4-5.4-6-4.5-6.2-4.7-8.2-3.6-8.1-3.4-9.5-2.8-10.5-2.4-11.3-2.2-13.5-1.6-13.6-1.4-16.3-2-38-1.1-50.2-0.6-73.3z"/>
<path fill="#f0ff5b" d="M0 0l19.4 0 0.4 175.1 0.5 54.3 0.8 40.7 1.1 35.3 1.5 31.3 2.1 26.5 2.7 22.3 2.6 16.3 2.9 13.7 4.1 14.8 4.1 11.5 5.3 11.6 5.5 9.5 6.8 9.2 6.7 7.1 4.6 4.1 5.1 4 9.5 6.1 12.2 6.1 12.3 4.6 14.9 4.3 16.3 3.5 19.1 3 21.7 2.5 21.8 1.7 25.8 1.4 28.6 1.1 36.7 0.8 91.1 0.9 157.8 0.3 0 19.4-544 0 0-541.6zM243.7 0l300.3 0 0 299.3-73.4-0.5-50.4-1.2-38-2-16.4-1.4-13.6-1.6-13.2-2.1-11.2-2.3-10.9-3-9.5-3.4-8.2-3.6-8.2-4.7-6.4-4.7-5.8-5.3-5-5.6-4.8-6.8-4.6-8.1-3.6-8.2-3.2-9.5-2.9-10.8-2.5-12.2-1.9-12.3-1.6-13.5-1.4-16.3-1.9-38-1.2-48.9-0.5-71.9z"/>
<path fill="#f6ff56" d="M0 0l19.1 0 0.4 172.4 1.1 95 1.1 36.7 1.5 29.8 2.1 27.2 2.6 23.1 2.8 17.6 3.1 15 3.8 13.5 4.4 12.2 4.9 10.9 5.5 9.5 6.1 8.3 7.3 8 4.4 4.1 5.2 4 10.3 6.7 11.2 5.6 13.3 5 14.9 4.3 16.3 3.5 19.1 2.9 20.4 2.3 23.1 1.9 24.5 1.3 28.5 1.1 35.4 0.8 92.5 0.9 159.1 0.3 0 19.1-544 0 0-541.6zM245.7 0l298.3 0 0 297.3-70.7-0.5-50.3-1.1-38.1-2-16.3-1.4-13.6-1.6-12.3-1.9-12.2-2.4-10.9-3-9.5-3.3-8.2-3.5-8.1-4.6-6.8-4.9-5.8-5.1-5.1-5.7-4.7-6.5-4.7-8.2-3.6-8.1-3.4-9.5-2.9-10.9-2.5-11.9-1.9-12.5-1.7-13.6-1.4-16.3-1.9-36.6-1.2-50.3-0.5-70.5z"/>
<path fill="#fbff51" d="M0 0l18.7 0 0.4 173.8 1.2 96.3 1.2 36.7 1.5 29.9 1.9 24.4 2.6 23.1 2.4 15.8 3.2 15.4 3.6 13.6 4.2 12.2 5.3 12 5.5 9.5 6.8 9.4 6.8 7.4 4.2 3.8 5 4 10.5 6.8 11.6 5.8 13.3 5.1 15.2 4.3 17.7 3.7 18.4 2.8 21 2.4 22.7 1.7 25.5 1.4 29.4 1 34 0.8 92.4 0.9 157.8 0.3 0 18.7-544 0 0-541.6zM247.6 0l296.4 0 0 295.4-70.7-0.6-49-1.1-38.1-2-16.3-1.4-13.6-1.6-13.6-2.2-10.9-2.3-10.8-2.9-9.6-3.4-8.1-3.7-7.3-4.1-7.5-5.4-5.6-5.1-5.2-5.7-4.8-6.8-4.5-8.2-3.6-8.1-3.3-9.5-2.9-10.9-2.2-10.8-2.1-13.1-1.6-14.1-1.3-14.9-2-38-1.2-48.9-0.5-69.2z"/>
<path fill="#fffe4d" d="M0 0l18.4 0 0.4 175.1 1.2 95 1.1 36.7 1.5 29.9 1.9 24.4 2.7 24.1 2.7 17.1 3.1 14.5 3.7 13.8 4.2 11.9 5.3 11.7 5.5 9.4 6.4 8.8 7.2 7.8 8.4 7.1 10.6 7 10.9 5.5 13.6 5.3 15 4.3 17.2 3.7 18.1 2.9 23.1 2.5 21.8 1.7 25.8 1.4 28.7 1 36.6 0.8 89.8 0.9 159.1 0.3 0 18.4-544 0 0-541.6zM249.6 0l294.4 0 0 293.4-70.7-0.6-49-1.2-36.7-2-16.3-1.4-13.6-1.6-12.3-2-12.2-2.6-9.5-2.5-9.5-3.3-8.2-3.6-8.2-4.6-6.8-4.9-5.8-5.2-6-6.8-4.5-6.4-4-7.1-3.6-8.2-3.4-9.5-2.9-10.8-2.4-11.5-2.1-13-1.6-13.6-1.4-16.2-1.9-36.7-1.2-47.5-0.5-69.2z"/>
<path fill="#fff84d" d="M0 0l18 0 0.5 175.1 1.2 95 1 35.3 1.6 31.3 2.1 27.1 2.5 21.7 2.8 17.7 2.9 14.1 4 14.4 4.2 11.7 5.2 11.4 5.5 9.5 6 8.1 7.4 8.2 4.6 4 5.2 4.1 9.6 6.2 12.2 6 12.3 4.7 15 4.3 16.3 3.5 19 3 21.8 2.4 21.7 1.7 25.9 1.4 28.5 1 36.8 0.9 91.1 0.8 159.1 0.4 0 18-544 0 0-541.6zM251.7 0l292.3 0 0 291.3-69.4-0.5-47.6-1.2-36.7-1.9-16.3-1.5-13.6-1.6-13.6-2.1-10.9-2.3-10.9-3-9.5-3.3-8.1-3.7-7.3-4.1-7.6-5.5-5.5-5-5.2-5.8-4.8-6.8-4.6-8.2-3.6-8.1-3.3-9.5-2.5-9.5-2.3-10.9-2.2-13.5-1.7-13.6-1.3-14.9-2.1-38.1-1.1-47.5-0.6-67.8z"/>
<path fill="#fff34d" d="M0 0l17.7 0 0.4 172.4 1.1 95 1.2 38 1.4 29.1 1.9 26.6 2.6 23.1 2.5 16.3 3.3 16.3 3.6 13.5 4.3 12.2 4.9 11.2 5.4 9.6 6.5 9.1 7.4 8.2 4.5 4 5.1 4.1 10.5 6.8 11 5.4 13.5 5.1 15 4.3 16.3 3.5 19 3 20.4 2.2 23.1 1.9 24.5 1.3 28.6 1 35.3 0.9 92.5 0.9 160.5 0.3 0 17.7-544 0 0-541.6zM253.7 0l290.3 0 0 289.3-68-0.6-47.6-1.1-36.7-2-16.3-1.5-13.6-1.6-12.3-2-12.2-2.5-9.5-2.6-9.6-3.3-8.1-3.6-8.2-4.6-6.8-4.9-5.8-5.1-6-6.8-4.5-6.5-4-7.1-3.6-8.2-3.3-9.1-2.7-9.9-2.6-12.2-2-12.2-1.7-13.6-1.3-14.9-2.1-36.7-1.2-47.5-0.6-67.8z"/>
<path fill="#ffee4d" d="M0 0l17.4 0 0.4 173.8 1.2 96.3 1.1 36.7 1.4 29.9 1.9 24.4 2.5 23.1 2.7 17.3 2.8 13.9 3.9 14.9 4.2 12.2 5.4 12.2 5.4 9.5 6.8 9.4 6.8 7.4 9.1 7.7 10.4 6.8 11.8 5.9 13.1 4.9 15.5 4.4 17.6 3.7 18.2 2.8 21.3 2.3 22.5 1.8 25.4 1.3 31 1.1 34 0.7 92.4 0.9 157.8 0.3 0 17.4-544 0 0-541.6zM255.8 0l288.2 0 0 287.2-68-0.6-47.6-1.2-36.7-2-15-1.4-13.6-1.7-12.5-2-12-2.6-10.2-2.8-8.8-3.2-8.2-3.7-7.1-4-7.6-5.4-5.7-5.2-5-5.7-4.9-6.8-4.5-8.1-3.6-8.2-3.3-9.5-2.6-9.5-2.3-10.8-2.2-13.6-1.7-13.6-1.3-14.9-2-36.7-1.2-46.1-0.6-66.5z"/>
<path fill="#ffe84d" d="M0 0l17.1 0 0.4 175.1 1.1 95 1.1 36.7 1.5 29.9 1.9 25.8 2.6 23 2.8 17.7 2.8 13.7 3.9 14.8 4.3 12.2 5.4 11.8 5.4 9.4 6.3 8.7 7.3 7.8 8.3 7.1 5.3 3.7 5.5 3.4 10.8 5.5 13.6 5.2 15 4.3 17.1 3.7 18.3 2.8 23.1 2.6 21.7 1.7 25.9 1.4 29 1 36.3 0.8 89.7 0.8 160.5 0.3 0 17.1-544 0 0-541.6zM257.9 0l286.1 0 0 285.2-65.3-0.6-47.6-1.2-36.7-2.1-15-1.3-13.9-1.7-13.3-2.2-10.8-2.3-9.6-2.6-9.5-3.3-8.1-3.6-8.2-4.6-6.3-4.5-6.1-5.4-5.3-5.8-4.6-6.4-4.7-8.2-3.6-8.1-3.4-9.5-2.6-9.5-2.4-10.9-2-12.2-1.8-13.6-1.4-14.9-2.1-36.7-1.2-47.5-0.6-65.1z"/>
<path fill="#ffe34d" d="M0 0l16.7 0 0.4 175.1 1.2 95 1 35.3 1.5 31.3 2.1 27.1 2.4 21.7 2.8 17.7 3.2 15.5 3.9 14.3 4.2 11.9 5.2 11.2 5.5 9.5 5.9 8.2 7.5 8.1 4.5 4.1 5.2 4.1 9.8 6.2 12 6 12.4 4.7 15 4.3 16.3 3.4 19.1 3 21.7 2.4 23.1 1.8 25.9 1.4 28.5 1 36.8 0.8 91.1 0.9 159.1 0.3 0 16.7-544 0 0-541.6zM260 0l284 0 0 283.1-66.6-0.7-46.3-1.2-36.7-2.1-15-1.4-13.6-1.8-12.2-2-10.9-2.4-9.7-2.7-9.3-3.3-8.2-3.7-8.1-4.7-6.3-4.6-6-5.4-4.8-5.5-4.9-6.8-3.9-6.7-4.1-9-3.1-8.7-3-10.8-2.3-10.9-2-12.2-1.7-13.6-1.4-14.9-2.1-35.3-1.2-46.2-0.6-65.1z"/>
<path fill="#ffdd4d" d="M0 0l16.4 0 0.4 172.4 1.1 95 1.1 38 1.4 30 1.9 25.7 2.5 23.1 2.4 16.4 3.2 16.2 3.6 13.7 4.6 13.4 4.9 11.2 5.5 9.7 6.4 9 7.4 8.1 4.5 4.1 5.1 4.1 10.5 6.7 11 5.5 13.5 5.1 15 4.3 16.3 3.4 19.1 3 20.4 2.3 23.1 1.8 24.5 1.3 28.5 1.1 35.4 0.8 92.5 0.9 161.8 0.3 0 16.4-544 0 0-541.6zM262.1 0l281.9 0 0 280.9-65.3-0.6-46.2-1.3-35.4-2-14.9-1.4-13.6-1.7-12.3-2-10.9-2.4-10.8-3-8.7-3.1-9-4.1-6.8-4-6.8-4.9-5.5-4.9-5.4-6-4.4-6-4.6-8.2-3.7-8.1-3.4-9.5-2.7-9.5-2.3-10.9-2.1-12.2-1.7-13.6-1.4-14.9-2.1-35.3-1.3-46.1-0.6-63.8z"/>
<path fill="#ffd84d" d="M0 0l16.1 0 0.4 173.8 1.1 96.3 1.1 36.7 1.4 29.9 1.8 24.4 2.6 23.8 2.7 17.9 2.8 14 3.9 14.9 4.2 12.2 5.4 12.2 5.5 9.5 6.8 9.4 6.8 7.4 9 7.7 10.4 6.7 11.8 5.9 13.1 5 15.5 4.4 17.7 3.7 18.3 2.8 21.1 2.3 23.1 1.7 25.8 1.4 30 1 34 0.8 92.5 0.8 159.1 0.3 0 16.1-544 0 0-541.6zM264.2 0l279.8 0 0 278.8-63.9-0.7-46.3-1.2-35.3-2.1-15-1.4-13.6-1.8-12.2-2-10.9-2.4-9.5-2.7-9.5-3.4-8.2-3.7-6.8-3.9-6.8-4.8-6.4-5.7-4.9-5.4-5-7.1-4.5-7.9-3.6-8.1-3.3-9.5-2.6-9.5-2.4-10.9-2-12.2-1.7-13.6-1.3-13.5-2.1-35.3-1.3-44.8-0.7-63.8z"/>
<path fill="#ffd34d" d="M0 0l15.8 0 0.4 175.1 1.1 95 1.1 36.7 1.4 29.9 2 26.6 2.4 22.2 2.7 17.7 3 15 4 14.8 4.2 12 5.4 12.1 5.5 9.4 6.3 8.6 7.3 7.9 8.2 7.1 5.4 3.7 5.4 3.3 10.9 5.5 13.6 5.3 14.9 4.3 17.3 3.6 18.1 2.9 23.1 2.5 21.8 1.7 25.8 1.4 31.1 1.1 34.2 0.7 91.1 0.8 160.5 0.3 0 15.8-544 0 0-541.6zM266.4 0l277.6 0 0 276.6-63.9-0.7-44.9-1.2-35.4-2.1-13.6-1.3-13.6-1.8-12.2-2-10.9-2.4-9.5-2.6-9.5-3.4-8.2-3.6-7.7-4.4-7.2-5.2-5.5-4.9-5.4-6.2-4.8-6.7-3.9-6.8-3.7-8.2-3.4-9.5-2.7-9.5-2.4-10.8-2-12.3-1.6-12.2-1.5-14.9-2.1-35.3-1.3-44.8-0.7-62.4z"/>
<path fill="#ffcd4d" d="M0 0l15.4 0 0.4 173.8 1.1 95 1 35.3 1.5 31.2 1.9 27.2 2.4 21.7 2.6 17.6 3.2 16.3 4 14.9 4.2 12.3 4.8 10.8 6.2 10.9 6 8.1 7.4 8.2 4.6 4 5.2 4.1 9.7 6.3 12.1 5.9 12.4 4.7 14.9 4.3 16.4 3.5 19 2.9 21.8 2.4 23.1 1.8 25.8 1.4 28.6 1 36.7 0.8 91.1 0.8 160.5 0.4 0 15.4-544 0 0-541.6zM268.6 0l275.4 0 0 274.4-62.6-0.7-44.8-1.3-35.4-2.1-15-1.5-12.2-1.6-12.2-2.1-10.9-2.4-9.5-2.7-9.6-3.4-8.1-3.7-6.8-3.9-6.8-4.9-5.8-5.2-5.1-5.6-4.8-6.6-3.9-6.8-3.9-8.1-3.4-9.5-2.8-9.5-2.4-10.9-2.1-12.2-1.6-12.2-1.5-15-2.2-35.3-1.3-44.8-0.7-61z"/>
<path fill="#ffc84d" d="M0 0l15.1 0 0.4 172.4 1.1 95 1 38 1.4 30.1 1.9 25.6 2.4 23.1 2.5 17.4 3 15.2 3.8 14.9 4.1 12.2 5.3 12.2 5.6 10 6.5 9 7.4 8.2 4.4 4 5.2 4.1 10.5 6.8 11 5.4 13.5 5.1 14.9 4.3 16.4 3.4 19 3 21.8 2.4 23.1 1.8 25.8 1.3 28.6 1 35.6 0.8 92.2 0.9 160.5 0.3 0 15.1-544 0 0-541.6zM270.8 0l273.2 0 0 272.2-61.2-0.7-44.9-1.3-35.3-2.2-15-1.5-12.2-1.6-12.3-2.2-10.9-2.4-9.5-2.8-9.5-3.5-8.2-3.8-6.8-4-6.2-4.6-6-5.4-4.8-5.4-4.9-6.8-3.9-6.8-4.1-9-3.1-8.6-2.7-9.6-2.4-10.8-2.1-12.2-1.7-13.6-1.4-13.6-2.1-33.9-1.3-43.5-0.7-61z"/>
<path fill="#ffc34d" d="M0 0l14.8 0 0.4 173.8 1.1 96.3 1.1 38.1 1.5 29.8 1.7 24.5 2.5 23 2.6 17.7 3 14.9 3.9 14.9 4.2 12.3 5.4 12.1 5.4 9.5 6.8 9.4 6.8 7.4 9.1 7.7 10.4 6.8 11.8 5.8 13.3 5.1 15.2 4.3 17.7 3.7 19 2.8 20.5 2.2 23.1 1.8 25.8 1.4 29.9 1 34 0.7 92.5 0.9 160.5 0.3 0 14.8-544 0 0-541.6zM273.1 0l270.9 0 0 270-61.2-0.8-43.5-1.3-34-2.1-13.6-1.3-13.6-1.8-12.3-2.1-10.8-2.4-10.3-3-8.8-3.2-7.7-3.6-7.2-4.2-6.8-4.9-5.5-4.9-5.4-6.1-4.1-5.7-4.1-6.8-4.1-8.7-3.2-8.9-2.8-9.5-2.5-10.9-2.1-12.2-1.6-12.2-1.5-14.9-2.2-34-1.3-43.4-0.7-59.7z"/>
<path fill="#ffbd4d" d="M0 0l14.5 0 0.4 175.1 1.1 95 1.1 36.7 1.4 29.9 1.9 26.9 2.4 21.9 2.6 17.7 3.2 16 4 15.2 4.1 11.8 5 11.3 5.9 10.2 6.4 8.8 7.2 7.8 8.4 7.1 5.2 3.7 5.4 3.3 10.9 5.5 13.6 5.2 15 4.3 17.7 3.8 17.6 2.7 23.2 2.6 21.7 1.7 25.9 1.3 31.2 1.1 34 0.7 91.2 0.9 161.8 0.3 0 14.5-544 0 0-541.6zM275.3 0l268.7 0 0 267.7-59.8-0.7-43.6-1.4-34-2.1-14.5-1.5-12.7-1.7-12.2-2.2-10.9-2.4-9.5-2.8-8.4-3.1-7.9-3.7-6.8-3.9-6.8-4.8-5.9-5.3-5-5.5-4.9-6.7-3.9-6.8-3.8-8.1-3.5-9.5-2.7-9.5-2.5-10.9-1.9-10.8-1.7-12.3-1.5-14.9-2.2-33.9-1.3-43.5-0.8-58.3z"/>
<path fill="#ffb84d" d="M0 0l14.2 0 0.4 173.8 1.1 95 0.9 35.3 1.4 31.2 1.8 25.8 2.4 23.1 2.6 17.6 3.1 16.3 3.5 13.6 4.5 13.6 4.9 11.3 5.8 10.4 6.8 9.5 7.5 8.1 4.5 4.1 5.2 4.1 9.6 6.1 12.3 6.1 12.2 4.6 15 4.2 16.3 3.5 19 3 21.8 2.4 23.1 1.8 25.9 1.4 28.5 1 36.7 0.7 91.2 0.9 161.8 0.3 0 14.2-544 0 0-541.6zM277.6 0l266.4 0 0 265.4-58.5-0.8-43.5-1.3-34-2.2-15-1.6-12.2-1.6-10.9-2-10.9-2.4-9.5-2.8-9.5-3.5-8.2-3.9-6.8-4-6.1-4.5-6-5.4-4.8-5.4-4.9-6.8-4-6.9-3.7-8-3.1-8.5-2.7-9.3-2.5-10.7-2.2-12.3-1.8-13.5-1.3-13.6-2.1-32.6-1.4-42.1-0.8-58.3z"/>
<path fill="#ffb24d" d="M0 0l13.9 0 0.4 173.8 1.1 95 0.9 35.5 1.4 30.4 1.8 26.4 2.4 23.1 2.6 18.1 3.1 15.8 3.7 14.6 4.2 12.6 5.3 12.2 5.4 9.8 6.6 9.2 7.4 8.1 4.5 4.1 5.2 4.1 10.3 6.6 11.3 5.6 13.2 5 15 4.2 16.3 3.5 19 2.9 21.8 2.4 23.1 1.8 25.9 1.4 29.9 1 35.3 0.8 92.5 0.8 160.5 0.3 0 13.9-544 0 0-541.6zM280 0l264 0 0 263-58.5-0.7-42.1-1.4-32.7-2.1-14.9-1.5-12.3-1.7-10.9-1.9-11.2-2.6-9.4-2.7-9.3-3.4-8.1-3.8-6.8-4-6.8-4.9-5.5-4.9-5.4-6.1-4.1-5.7-4.1-6.9-4.1-8.8-3.1-8.5-2.8-9.5-2.2-9.7-2.2-12-1.8-13.6-1.4-13.6-2.2-32.5-1.4-42.1-0.7-57z"/>
<path fill="#ffad4d" d="M0 0l13.6 0 0.4 172.4 1 96.4 1.1 38 1.4 29.9 1.8 25.8 2.4 23 2.6 17.7 2.9 15.1 3.8 14.7 4.4 13.1 5.4 12.4 5.4 9.6 6.8 9.4 6.8 7.4 4.2 3.8 5.1 4.1 10.5 6.8 11.5 5.7 13.6 5.1 15 4.2 17.7 3.7 19 2.9 20.4 2.2 23.1 1.7 25.9 1.4 62.5 1.7 92.5 0.9 163.2 0.3 0 13.6-544 0 0-541.6zM282.3 0l261.7 0 0 260.7-57.1-0.8-42.2-1.4-32.6-2.1-13.6-1.4-13.6-1.9-10.9-2-10.9-2.5-9.5-2.8-8.2-3-8.1-3.8-6.8-3.9-6.1-4.3-6.2-5.5-5.4-5.9-4.5-6.3-4-6.8-3.7-7.8-3.2-8.5-2.8-9.5-2.3-9.5-2.3-12.2-1.7-12.2-1.5-13.6-2.3-33.9-1.4-42.1-0.8-55.6z"/>
<path fill="#ffa84d" d="M0 0l13.3 0 0.4 173.8 1.1 96.3 1 36.7 1.4 29.9 1.8 26.7 2.4 22.1 2.7 19 3.1 15.4 3.8 14.5 4.4 12.8 5.1 11.6 5.7 10.1 6.6 8.9 7 7.7 8.6 7.3 10.5 6.8 10.9 5.5 13.7 5.3 14.8 4.3 17.7 3.7 18.6 2.9 22.2 2.4 21.3 1.7 26.3 1.4 31.3 1 34 0.7 93.8 0.9 160.5 0.3 0 13.3-544 0 0-541.6zM284.7 0l259.3 0 0 258.3-55.8-0.8-42.1-1.4-32.7-2.2-13.6-1.5-12.2-1.6-12.2-2.3-9.6-2.2-9.5-2.8-8.8-3.2-8.7-4.1-6.8-4.1-5.7-4-6-5.5-4.9-5.4-4.9-6.8-4-6.8-3.8-8.1-3-8.2-2.8-9.5-2.6-10.8-1.9-10.9-1.8-12.2-1.4-13.6-2.3-32.6-1.4-40.7-0.8-55.6z"/>
<path fill="#ffa24d" d="M0 0l13 0 0.4 173.8 1 95 1 35.3 1.4 31.2 1.8 27.2 2.2 21.7 2.5 17.6 3.4 17.7 3.5 13.5 4.5 13.6 4.7 11 6 10.7 6.8 9.5 7.5 8.2 4.6 4.1 5.1 3.9 9.5 6.1 12.2 6.1 12.3 4.6 14.9 4.3 16.5 3.5 18.9 2.9 22.6 2.5 22.3 1.7 25.8 1.4 28.7 1 36.6 0.8 91.1 0.8 163.2 0.3 0 13-544 0 0-541.6zM287.1 0l256.9 0 0 255.9-55.8-0.8-40.8-1.5-32.6-2.2-13.6-1.5-12.2-1.7-10.9-2-10.9-2.6-9.5-2.8-8.5-3.2-7.8-3.8-6.8-4-6.2-4.5-6-5.4-4.8-5.4-4.8-6.6-4-7-3.2-6.8-3.2-8.1-2.9-9.5-2.5-10.9-2.1-10.8-1.7-12.3-1.5-13.5-2.3-32.6-1.4-40.7-0.9-54.3z"/>
<path fill="#ff9d4d" d="M0 0l12.7 0 0.4 173.8 1 95 0.9 33.9 1.4 31.2 1.8 27.2 2.3 23.1 2.6 18.5 2.9 15.4 3.9 15.4 4.4 13.1 5.1 11.9 5.5 9.8 6.7 9.5 7.5 8.2 4.5 4.1 5.2 4 10.1 6.5 11.6 5.7 12.9 4.9 14.9 4.2 16.3 3.5 19.1 2.9 21.7 2.4 23.2 1.8 25.8 1.4 28.6 1 36.7 0.8 92.5 0.8 161.8 0.3 0 12.7-544 0 0-541.6zM289.6 0l254.4 0 0 253.4-54.4-0.8-40.8-1.5-31.3-2.1-13.6-1.5-12.6-1.8-11.9-2.2-10.8-2.6-9.6-2.9-8-3.2-6.9-3.3-6.8-3.9-6.8-5-5.5-5-5.2-5.8-4.3-6-4.1-6.9-3.5-7.5-3.1-8.1-2.9-9.5-2.5-10.9-2-10.9-1.8-12.2-1.5-13.6-2.2-31.2-1.5-40.7-0.8-52.9z"/>
<path fill="#ff984d" d="M0 0l12.4 0 0.4 173.8 1 95 1.1 38 1.3 29.9 1.8 25.8 2.3 23 2.8 19 2.9 15 3.8 14.9 4.2 12.6 5.1 11.8 5.8 10.3 6.2 8.7 7.4 8.2 4.4 4.1 5.1 4 10.6 6.8 11.2 5.6 13.6 5.1 14.9 4.2 16.3 3.4 19.1 3 21.7 2.4 23.2 1.7 25.8 1.4 28.6 1 35.3 0.7 92.5 0.9 163.2 0.3 0 12.4-544 0 0-541.6zM292.1 0l251.9 0 0 250.9-54.4-0.8-39.4-1.5-31.3-2.2-13.6-1.5-12.3-1.8-10.8-2-10.9-2.6-9.5-3-8.2-3.1-6.8-3.2-6.8-4-6.8-4.9-5.4-4.9-5.5-6.1-4.1-5.7-4-6.8-3.9-8.1-3.1-8.2-2.6-8.4-2.5-10.6-2.1-10.8-1.8-12.2-1.5-13.6-2.3-31.2-1.4-39.4-0.9-52.9z"/>
<path fill="#ff924d" d="M0 0l12.1 0 0.4 175.1 1.1 96.4 1 36.7 1.4 29.8 1.7 24.7 2.3 22.8 2.7 19 3.1 16 4 15.3 4.2 12.2 5.3 12.2 5.4 9.5 6.9 9.5 6.9 7.4 8.8 7.5 10.4 6.8 10.8 5.4 14.2 5.5 14.3 4.1 17.6 3.7 20 3 20.8 2.3 23.2 1.7 25.8 1.4 29.9 1 34 0.7 92.5 0.9 163.2 0.3 0 12.1-544 0 0-541.6zM294.6 0l249.4 0 0 248.4-51.7-0.8-39.4-1.5-31.3-2.2-13.6-1.5-12.2-1.8-10.9-2-10.9-2.6-9.5-2.9-8.2-3.1-6.9-3.3-7-4.1-6.5-4.7-5.4-4.8-4.9-5.4-4.6-6.2-4.1-6.8-3.6-7.4-3.2-8.1-2.7-8.9-2.6-10.1-2.1-10.9-1.8-12.2-1.6-13.6-2.3-31.2-1.5-39.4-0.9-51.5z"/>
<path fill="#ff8d4d" d="M0 0l11.8 0 0.4 175.1 1 93.7 1 36.6 1.3 29.9 1.8 27.2 2.2 21.7 2.4 17.6 3.4 17.7 3.7 14.9 4.5 13.6 4.7 10.8 6.1 10.9 6.8 9.5 7.4 8 8.1 6.9 5.5 3.9 5.4 3.3 12.3 6 13.6 5.1 14.9 4.1 16.3 3.4 19.1 2.9 23.1 2.5 21.8 1.7 25.8 1.3 31.3 1 34 0.7 91.1 0.9 163.2 0.3 0 11.8-544 0 0-541.6zM297.2 0l246.8 0 0 245.8-51.7-0.8-39.4-1.6-31.3-2.3-12.2-1.4-12.3-1.8-10.9-2.1-9.5-2.3-9.5-2.9-8.2-3.1-7.3-3.5-7-4.1-6.1-4.4-5.7-5.1-4.9-5.4-4.3-5.8-4.1-6.8-3.8-7.8-3.2-8.1-2.9-9.5-2.3-9.5-2.2-10.9-1.8-12.2-1.5-12.9-2.3-30.5-1.5-39.4-0.9-50.2z"/>
<path fill="#ff884d" d="M0 0l11.5 0 0.4 173.8 1 95 0.9 33.9 1.3 31.2 1.8 27.2 2.3 23.1 2.6 18.6 2.8 15.3 4 16 4 12.6 5.2 12.1 5.7 10.5 6.8 9.6 7.7 8.4 4.6 4.1 5.2 4.1 9.7 6.2 12.1 6 12.4 4.6 15 4.3 16.3 3.4 19 3 21.8 2.4 21.7 1.7 25.9 1.4 29.9 1 36.7 0.8 92.5 0.9 163.2 0.3 0 11.5-544 0 0-541.6zM299.8 0l244.2 0 0 243.2-50.3-0.9-38.1-1.4-31.3-2.4-12.2-1.4-12.3-1.8-10.8-2.1-10.2-2.4-8.9-2.7-8.1-3.2-7.8-3.6-6.9-4.1-5.7-4.2-6-5.3-4.9-5.4-4.1-5.5-4.1-6.8-4-8.1-3.1-8.1-3-9.5-2.3-9.5-2.1-10.9-1.8-12.1-1.4-12.3-2.3-29.9-1.6-38-0.9-50.2z"/>
<path fill="#ff824d" d="M0 0l11.3 0 0.3 173.8 1 95 1 36.4 1.4 31.2 1.7 26.1 2.3 23 2.7 19 2.8 15 4.1 16 4 12.3 5.4 12.4 5.3 9.5 6.7 9.5 7.1 7.9 8.2 7.1 5.4 3.9 5.5 3.3 12.2 6.2 12.2 4.7 15 4.3 16.3 3.5 19.1 3 21.7 2.5 23.1 1.8 25.9 1.4 29.9 1 35.4 0.8 92.4 0.8 164.6 0.3 0 11.3-544 0 0-541.6zM302.4 0l241.6 0 0 240.6-50.3-0.9-38.1-1.6-29.9-2.3-12.3-1.5-12.2-1.8-10.9-2.2-9.5-2.3-9.5-3-8.2-3.2-6.8-3.3-6.8-4.1-5.5-4-6-5.4-4.9-5.4-5-6.8-3.9-6.8-3.2-6.7-3.2-8.3-2.6-8.1-2.4-9.5-2.1-10.9-1.9-12.2-1.5-12.2-2.3-29.9-1.6-38-0.9-48.8z"/>
<path fill="#ff7d4d" d="M0 0l11 0 0.3 172.4 1 95 1 38 1.3 29.9 1.7 26.1 2.2 22.8 2.7 19 3.3 17.6 3.8 15 4 12.2 4.6 10.8 5.9 10.9 6.7 9.5 7.3 8.1 4.5 4.1 5.1 4.1 10.4 6.8 11.6 5.7 13.6 5.1 15 4.2 17.6 3.7 19.1 2.8 20.4 2.2 23.1 1.8 25.8 1.3 30 1 34 0.8 93.8 0.8 163.2 0.3 0 11-544 0 0-541.6zM305.1 0l238.9 0 0 237.9-49-0.9-36.7-1.6-29.9-2.3-12.2-1.4-12.3-1.9-10.9-2.1-9.5-2.4-9.5-3-8.2-3.2-6.8-3.3-6.8-4-5.6-4.1-6-5.4-4.7-5.2-4.2-5.7-4.2-6.8-3.8-7.9-3.3-8.4-2.5-8.1-2.4-9.5-2.2-10.9-1.9-12.1-1.4-12.3-2.4-29.9-1.5-36.6-1-47.5z"/>
<path fill="#ff774d" d="M0 0l10.7 0 0.3 173.8 1.1 96.3 1 36.7 1.3 29.9 1.7 25.8 2.1 21.7 2.4 17.6 3 16.3 3.6 15.2 4.2 13.3 5.1 12.2 5.7 10.6 6.8 9.8 7.2 8.1 4.4 4.1 5.1 4.1 10.3 6.8 11 5.5 13.6 5.3 15 4.2 17.7 3.8 19 2.9 20.4 2.2 23.1 1.8 25.9 1.4 29.9 1 34 0.7 93.8 0.9 164.6 0.3 0 10.7-544 0 0-541.6zM307.9 0l236.1 0 0 235.2-49-1-36.7-1.6-28.5-2.3-12.3-1.5-12.2-1.9-10.9-2.2-9.5-2.5-8.2-2.6-8.1-3.2-6.8-3.3-6.8-4-5.6-4.1-6.1-5.4-4.7-5.2-4.2-5.7-4.1-6.8-3.9-7.9-3.3-8.4-2.5-8.1-2.4-9.5-2.2-10.9-3.2-23.3-2.4-29.6-1.6-36.7-0.9-46.1z"/>
<path fill="#ff724d" d="M0 0l10.4 0 0.4 173.8 1 93.6 0.8 35.3 1.3 31.2 1.7 25.8 2.1 23.1 2.6 19 2.9 16.3 3.9 16.3 4.2 12.9 4.8 11.5 5.8 10.9 6.5 9.5 7.4 8.3 4.2 3.9 5 4.1 10.2 6.8 10.6 5.4 13.9 5.4 14.5 4.3 17.7 3.8 18.1 2.8 22.7 2.5 21.8 1.7 25.8 1.4 31.3 1.1 35.4 0.7 91.1 0.9 165.9 0.3 0 10.4-544 0 0-541.6zM310.6 0l233.4 0 0 232.4-46.2-1-36.8-1.6-28.5-2.3-12.3-1.5-12.2-1.9-10.9-2.2-9.5-2.4-8.2-2.6-8.1-3.3-6.8-3.3-6.8-4-5.5-4-6.1-5.5-4.7-5.2-4.2-5.6-4-6.5-3.5-7.1-3.3-8.1-2.7-8.4-2.4-9.3-2.3-10.8-1.9-12.3-1.5-12.2-2.4-28.5-1.6-35.3-0.9-46.1z"/>
<path fill="#ff6d4d" d="M0 0l10.1 0 0.4 173.8 1 95 0.9 35.3 1.3 31.2 1.7 25.8 2.3 23.9 2.7 19.5 2.7 15 4.1 16.3 4.1 12.6 5 11.8 5.9 10.7 6.8 9.6 6.8 7.5 8.5 7.5 10.5 7 10.9 5.6 13.6 5.3 14.9 4.3 16.5 3.6 18.9 3 21.8 2.4 21.7 1.7 25.9 1.4 29.9 1.1 36.7 0.8 92.5 0.8 165.9 0.4 0 10.1-544 0 0-541.6zM313.5 0l230.5 0 0 229.5-46.2-1-35.4-1.6-28.6-2.3-23.2-3.3-10.8-2.2-9.5-2.5-8.1-2.6-8.2-3.2-6.8-3.3-6.8-4.1-5.4-3.9-6-5.4-4.9-5.4-4.1-5.5-4.1-6.7-3.4-6.8-3.3-8.2-2.6-8.1-2.5-9.5-2.3-10.9-1.7-10.8-1.6-12.2-2.4-28.6-1.6-35.2-1-44.8z"/>
<path fill="#ff674d" d="M0 0l9.9 0 0.3 172.4 1 95 1 38 1.2 29.9 1.7 25.8 2.2 23.1 2.8 20.3 3 16.5 4.1 16.1 4 12.2 5.3 12.3 5.7 10.1 6.3 8.9 7.3 8 4.5 4.2 5 3.9 10.7 6.9 11 5.5 13.6 5.1 15 4.2 16.3 3.4 19.1 3 21.7 2.3 23.1 1.8 25.9 1.3 29.9 1.1 36.7 0.7 92.5 0.8 163.2 0.3 0 9.9-544 0 0-541.6zM316.3 0l227.7 0 0 226.7-44.9-1-35.3-1.7-28.6-2.5-12.2-1.5-10.9-1.8-9.5-2-9.6-2.5-8.1-2.6-8.2-3.2-6.8-3.3-6.8-4.1-5.4-4-5.7-5.1-5-5.4-4.3-5.8-3.9-6.4-3.4-6.8-3.3-8.2-2.6-8.1-2.5-9.5-2-9.5-1.9-10.9-1.6-12.2-2.5-28.5-1.6-33.9-1-44.8z"/>
<path fill="#ff624d" d="M0 0l9.6 0 0.3 172.4 1 95 1 38 1.2 29.9 1.8 27.2 2.1 21.7 2.3 17.6 3.2 17.7 3.6 14.9 4.3 13.6 5 12 5.4 10.2 6.8 9.9 7.7 8.6 4.5 4.2 5 3.9 10.4 6.8 11.8 5.9 13.4 5 14.4 4.1 17.1 3.6 20.4 3 20.4 2.2 23.1 1.8 25.9 1.3 29.9 1 34 0.8 93.8 0.8 164.6 0.3 0 9.6-544 0 0-541.6zM319.3 0l224.7 0 0 223.7-44.9-1-34-1.7-27.9-2.4-22.4-3.4-10.1-2.1-8.9-2.3-8.2-2.6-8.2-3.3-6.8-3.3-6.8-4.1-5.4-4.1-5.4-4.8-4.9-5.3-4.1-5.5-4.2-6.8-3.4-6.7-3.3-8.2-2.7-8.1-2.5-9.5-2-9.5-1.8-10.9-1.6-12.2-2.5-27.2-1.6-33.9-1.1-43.4z"/>
<path fill="#ff5d4d" d="M0 0l9.3 0 0.4 171 0.9 96.4 1 36.7 1.2 29.8 1.6 25.8 2.1 23.1 2.5 19 2.8 16.3 3.9 16.3 4.2 13.4 5.1 12.4 5.8 10.8 6.7 9.6 7.2 8.1 4.4 4.1 4.8 3.9 10.6 6.9 11.2 5.7 13.6 5.2 14.9 4.3 17.7 3.7 18.8 2.9 20.7 2.2 23.5 1.8 26 1.4 30.7 1 34 0.7 93.8 0.9 164.6 0.3 0 9.3-544 0 0-541.6zM322.3 0l221.7 0 0 220.8-43.5-1.1-34-1.7-27.2-2.5-12.3-1.6-10.8-1.9-9.6-2-8.4-2.3-8.3-2.7-7.7-3.1-7.4-3.7-6.2-3.8-5.8-4.4-5.1-4.6-5.5-6.1-4-5.5-3.3-5.5-3.5-7-3.3-7.9-2.7-8.1-2.5-9.5-2-9.6-3.3-21.7-2.6-27.9-1.6-33.2-1.1-42z"/>
<path fill="#ff574d" d="M0 0l9.1 0 0.3 173.8 1 95 0.9 35.3 1.2 29.8 1.6 25.8 2.2 24.1 2.6 19.4 2.9 16.3 3.9 16.3 4.2 13.1 5.4 12.7 5.5 10.1 6.2 8.9 7.4 8.3 4.1 3.9 5 4 10.2 6.8 10.6 5.5 13.9 5.4 14.7 4.3 18 3.8 18.7 2.9 23.1 2.5 21.8 1.7 25.8 1.3 31.3 1.1 35.4 0.7 91.1 0.8 165.9 0.3 0 9.1-544 0 0-541.6zM325.3 0l218.7 0 0 217.7-42.2-1.1-34-1.7-27.2-2.6-21.7-3.4-9.5-2-9.6-2.6-8.1-2.8-8-3.3-7-3.6-5.4-3.4-5.5-4.1-5.4-5-5-5.6-4-5.5-4.1-6.7-3.2-6.6-2.9-7-2.7-8.2-2.5-9.5-2.1-9.5-3.3-21.7-2.5-27.1-1.7-32.6-1.1-40.7z"/>
<path fill="#ff524d" d="M0 0l8.8 0 0.3 173.8 1 95 0.9 35.3 1.2 30.6 1.7 26.4 2.2 23.1 2.7 20.3 3 16.4 4 16.2 3.9 12.2 5.1 12.2 6 10.9 6.7 9.5 6.9 7.6 8.4 7.3 5.2 3.7 5.4 3.4 10.9 5.6 13.6 5.3 13.6 4 17.7 3.8 19 3 21.8 2.5 21.8 1.7 25.8 1.4 29.9 1.1 36.7 0.8 92.5 0.8 167.3 0.3 0 8.8-544 0 0-541.6zM328.4 0l215.6 0 0 214.6-40.8-1.1-32.8-1.7-27-2.6-21.8-3.4-10-2.2-9-2.5-8.2-2.8-6.9-2.8-6.7-3.4-6.8-4.2-5.4-4.2-5-4.5-4.6-5-4-5.5-3.7-5.8-3.5-6.8-2.9-6.8-2.8-8.1-2.7-9.5-2.1-9.8-3.4-21.4-2.5-25.8-1.8-32.6-1.2-40.7z"/>
<path fill="#ff4d4d" d="M0 0l8.5 0 0.4 172.4 0.9 95 1 38 1.2 29.9 1.6 25.8 2.2 23.1 2.4 19 3.2 17.6 3.6 15 4.3 13.5 5.1 12.3 5.9 10.8 6.7 9.5 7.4 8.1 4.5 4.1 5 4 10.6 6.9 11.2 5.5 13.6 5.1 14.9 4.2 16.4 3.4 19 2.9 21.8 2.4 23.1 1.8 25.8 1.3 29.9 1 36.8 0.8 92.4 0.8 164.6 0.3 0 8.5-544 0 0-541.6zM331.6 0l212.4 0 0 211.4-39.4-1.1-32.7-1.8-25.8-2.4-21.8-3.5-9.5-2.1-8.5-2.3-8.1-2.7-7.9-3.3-6.8-3.5-5.4-3.3-5.5-4-5.5-4.9-4.9-5.5-4.1-5.4-3.4-5.4-3.8-7.3-3.2-7.6-2.8-8.2-2.2-8.1-2.2-9.5-1.9-10.5-1.6-11.3-2.4-25.2-1.8-31.8-1.2-39.3z"/>
<path fill="#fa4d4d" d="M0 0l8.3 0 0.3 171 0.9 95.2 0.9 37.9 1.2 29.8 1.7 27.2 2 21.7 2.4 18.7 2.8 16.6 3.8 16.3 4.3 13.8 5.4 13.3 5.4 10.1 6.8 9.9 7.7 8.6 4.6 4.2 4.9 3.9 10.4 6.8 11.9 5.9 13.3 4.9 14.4 4.1 17.2 3.6 20.4 3.1 20.4 2.2 23.1 1.7 25.8 1.4 63.9 1.7 93.9 0.8 165.9 0.3 0 8.3-544 0 0-541.6zM334.8 0l209.2 0 0 208.2-39.4-1.2-31.3-1.8-25.9-2.5-20.4-3.3-9.5-2.2-9.5-2.6-8.2-2.9-6.8-2.9-6.8-3.5-5.4-3.4-5.5-4.1-5.4-4.9-5.3-5.9-3.9-5.5-3.4-5.4-3.4-6.8-3-7.2-2.7-7.7-2.2-8.2-2.2-9.5-2-10.8-1.5-10.9-2.5-24.4-1.8-31.2-1.2-38z"/>
<path fill="#f44d4d" d="M0 0l8 0 0.3 171 1 96.4 0.9 36.7 1.2 29.8 1.5 25.8 2.1 23.1 2.6 20.4 2.9 16.3 3.8 16.3 4.3 13.4 5 12.4 5.8 10.8 6.7 9.5 7.2 8.2 4.4 4 4.9 4 10.4 6.9 11.3 5.7 13.6 5.1 15 4.3 17.7 3.7 18.8 2.9 20.6 2.3 23.1 1.7 25.9 1.4 29.9 1 35.3 0.8 93.9 0.8 165.9 0.3 0 8-544 0 0-541.6zM338.1 0l205.9 0 0 204.9-39.4-1.2-30-1.8-24.4-2.6-10.9-1.5-10.9-2.1-9.5-2.2-8.2-2.3-8.1-2.9-6.8-3-6.6-3.4-5.7-3.6-5.4-4.1-4.9-4.5-4.6-5.1-4.1-5.4-3.6-5.8-3.5-6.8-2.9-6.8-2.9-8.1-2.3-8.2-2.2-9.5-3.3-20.3-2.6-24.5-1.8-29.8-1.3-38z"/>
<path fill="#ef4d4d" d="M0 0l7.7 0 0.4 175.1 0.9 93.7 0.9 35.3 1.2 29.8 1.7 27.2 2.1 23.1 2.6 20.3 2.9 16.3 4 16.3 4.2 13.1 5.3 12.7 5.5 10.2 6.2 8.8 7.4 8.4 4.1 3.8 5 4.1 10.2 6.8 10.7 5.5 13.8 5.3 14.7 4.3 18.1 3.9 18.6 2.9 23.2 2.5 21.7 1.6 25.9 1.4 31.2 1 35.4 0.8 92.5 0.8 165.9 0.3 0 7.7-544 0 0-541.6zM341.5 0l202.5 0 0 201.5-36.7-1.2-29.9-1.8-24.5-2.5-20.4-3.4-9.5-2.2-8.2-2.3-8.2-2.8-6.8-2.9-6.8-3.5-6-3.8-5.4-4.1-4.9-4.4-4.6-5.1-4.1-5.4-3.5-5.5-3.5-6.7-3-6.8-2.9-8.1-2.3-8.2-1.9-8.1-3.6-20.4-2.6-24.4-1.9-29.9-1.3-36.6z"/>
<path fill="#ea4d4d" d="M0 0l7.5 0 0.3 173.8 1 95 0.8 35.3 1.3 31.3 1.6 25.7 2.1 23.1 2.6 20.3 3.2 17.7 3.6 14.9 4.4 13.6 5.1 12.2 5.9 10.9 6.8 9.5 6.8 7.6 8.5 7.3 5.1 3.7 5.5 3.4 10.9 5.5 13.6 5.3 14.9 4.4 16.4 3.5 19 3 21.8 2.4 23.1 1.8 25.8 1.4 29.9 1 36.7 0.8 92.5 0.8 167.3 0.3 0 7.5-544 0 0-541.6zM344.9 0l199.1 0 0 198.1-35.9-1.3-29.4-1.8-24.5-2.7-20.4-3.5-8.1-1.9-8.2-2.4-7.4-2.6-7.5-3.2-6.8-3.6-5.5-3.4-5.4-4.1-5.1-4.7-4.4-4.9-4.1-5.4-3.8-6-3-5.8-2.8-6.4-3-8.2-2.4-8.2-2.2-9.4-3.3-19-2.7-24.4-1.9-28.5-1.2-35.3z"/>
<path fill="#e44d4d" d="M0 0l7.2 0 0.3 172.4 1 95 0.9 38 1.2 29.9 1.6 26.4 2.1 22.5 2.6 20.3 3.2 17.7 3.6 14.9 4.3 13.6 5.1 12.2 5.9 10.9 6.7 9.5 7.3 8.1 4.5 4.1 5.1 4 10.6 6.8 11.1 5.5 13.6 5.1 15 4.2 16.3 3.4 19 3 21.8 2.3 23.1 1.8 25.9 1.3 29.9 1 36.7 0.8 92.5 0.8 165.9 0.3 0 7.2-544 0 0-541.6zM348.5 0l195.5 0 0 194.6-35.4-1.4-28.5-1.9-23.7-2.6-19.8-3.5-8.2-2-8.2-2.4-8.1-2.9-6.3-2.8-6-3.1-5.9-3.7-5.4-4-5-4.6-4.1-4.4-4-5.2-4-6.2-2.9-5.4-3.1-6.8-2.5-6.8-2.5-8.2-2.4-9.5-1.9-9.5-1.7-10.8-2.7-23.1-1.9-28.5-1.3-33.9z"/>
<path fill="#df4d4d" d="M0 0l7 0 0.3 171 0.9 95.1 0.9 38 1.2 29.8 1.6 27.2 2 21.7 2.4 19.7 2.9 17 3.8 16.3 4.2 13.7 5.4 13.3 5.5 10.2 6.8 9.8 7.6 8.6 4.6 4.2 4.9 4 10.5 6.7 11.8 5.9 13.4 5 14.5 4.1 17 3.5 20.4 3.1 20.4 2.2 23.1 1.7 25.9 1.4 63.9 1.7 93.8 0.8 167.3 0.3 0 7-544 0 0-541.6zM352.1 0l191.9 0 0 190.9-34-1.3-28.6-2-23.1-2.7-19-3.4-8.2-2-8.1-2.5-8.2-3-6.6-3-5.6-3-5.9-3.7-5-3.9-4.7-4.3-3.8-4.1-4.2-5.4-3.6-5.5-3.6-6.7-3.1-6.8-2.5-6.8-2.4-8.1-2.1-8.2-3.5-19-2.7-23.1-2-27.1-1.4-33.9z"/>
<path fill="#d94d4d" d="M0 0l6.7 0 0.3 172.4 1 96.4 0.8 35.3 1.2 29.8 1.5 25.8 2.1 23.4 2.5 20.1 2.9 16.9 4 17 4.2 13.4 5.1 12.4 5.8 10.8 6.6 9.6 7.3 8.1 4.4 4.1 4.8 3.9 10.6 6.9 11.2 5.7 13.6 5.2 14.9 4.2 17.7 3.8 19.2 2.9 21.6 2.3 23.1 1.7 25.9 1.3 29.9 1.1 35.3 0.7 93.9 0.8 165.9 0.3 0 6.7-544 0 0-541.6zM355.8 0l188.2 0 0 187.2-32.6-1.3-27.2-2-23.2-2.7-19-3.5-8.2-2.1-8.1-2.5-6.8-2.5-6.8-3-6.2-3.3-6.1-4-5.3-4.2-4.2-3.9-4.1-4.5-4-5.3-3.4-5.3-3.4-6.3-2.8-6.1-2.7-7.3-4.4-15.6-3.6-19-2.6-21.7-2.1-27.2-1.3-32.5z"/>
<path fill="#d44d4d" d="M0 0l6.5 0 0.3 175.1 0.9 93.7 0.9 35.3 1.1 29.8 1.7 27.2 2 23.1 2.6 20.3 3 17.2 3.7 15.4 4.2 13.6 5 12.2 5.8 10.9 6.6 9.5 7.4 8.3 4.1 3.9 5 4.1 10.2 6.7 10.6 5.5 14 5.4 14.6 4.2 18.4 4 18.3 2.8 23.1 2.5 21.8 1.6 25.8 1.4 31.3 1 35.3 0.7 92.5 0.9 167.3 0.2 0 6.5-544 0 0-541.6zM359.6 0l184.4 0 0 183.4-32.6-1.4-25.9-2-21.7-2.7-18.9-3.5-15.1-4.3-7-2.5-6.6-3-5.5-2.8-5.9-3.7-5.4-4.1-5-4.5-4.1-4.4-4.1-5.3-3.9-6.2-2.9-5.2-2.7-5.9-2.7-7.1-2.4-7.6-2.1-8.1-3.7-18.7-2.7-21.7-2-26.1-1.4-31.2z"/>
<path fill="#cf4d4d" d="M0 0l6.2 0 0.3 173.8 0.9 93.6 0.9 35.3 1.2 32.4 1.5 24.6 2 23.1 2.5 20.4 3.1 17.6 3.4 15 4.6 14.9 5 12.2 5.7 10.9 6.5 9.5 7.9 8.8 8.5 7.5 5.1 3.6 5.4 3.4 10.9 5.5 13.6 5.3 15 4.3 16.7 3.7 18.6 2.9 22.7 2.5 22.2 1.7 25.8 1.4 30 1 36.7 0.8 92.5 0.8 168.6 0.3 0 6.2-544 0 0-541.6zM363.5 0l180.5 0 0 179.5-31.3-1.5-25.8-2-21.8-2.8-17.6-3.5-15-4.3-6.8-2.6-6.8-3.1-5.5-2.9-5.4-3.5-5.2-4-4.4-4-4-4.3-4.1-5.2-3.6-5.5-3-5.4-2.9-6.1-2.7-7-2.4-7.3-2.2-8.1-3.6-18-2.8-21.4-2.1-25.8-1.4-29.8z"/>
<path fill="#c94d4d" d="M0 0l6 0 0.3 171 0.9 95.1 0.9 39.3 1.1 28.5 1.6 27.2 1.9 21.7 2.3 19 3.3 19 3.5 15.3 4.4 14.6 5.1 12.4 5.6 10.7 6.6 9.7 4.1 4.9 4.1 4.3 4.6 4.1 4.9 4 5.4 3.7 5.4 3.2 11 5.4 13.6 5.1 14.9 4.2 16.3 3.4 19.1 2.9 21.7 2.4 23.2 1.7 25.8 1.4 29.9 1 36.7 0.8 93.9 0.8 165.9 0.2 0 6-544 0 0-541.6zM367.6 0l176.4 0 0 175.5-29.9-1.5-24.5-2-20.4-2.7-18.6-3.7-14.1-4.1-7.1-2.7-6.4-2.9-5.5-2.9-5.7-3.7-5.2-3.9-4.5-4.2-3.8-4.1-4.3-5.4-3.5-5.5-3-5.4-3.2-6.8-2.6-6.8-4.3-14.9-3.6-17.6-2.7-20.4-2-24.4-1.5-28.5z"/>
<path fill="#c44d4d" d="M0 0l5.7 0 0.3 160.2 0.7 93.7 0.8 40.7 1.1 32.6 1.6 28.5 2 24.4 2.6 21.7 2.9 17.7 4 17.6 4.1 13.5 5 12.3 5.9 11.3 6.8 9.9 7.8 8.7 8.5 7.4 9.6 6.4 12.2 6.3 12.2 4.7 13.6 4.1 16.4 3.7 17.6 2.9 23.2 2.7 24.4 1.9 28.6 1.5 31.3 1.1 40.8 0.8 93.8 0.7 160.5 0.3 0 5.7-544 0 0-541.6zM371.7 0l172.3 0 0 171.3-28.6-1.5-23.1-2-20.4-2.7-17.7-3.6-14.9-4.4-12.3-5.1-5.4-3-5.9-3.7-5-3.9-4.7-4.3-3.8-4.1-3.7-4.7-3.3-4.8-3.5-6.3-2.8-5.9-2.7-6.8-4.5-14.9-3.6-17.4-2.7-19.3-2.1-23-1.5-28.5z"/>
<path fill="#bf4d4d" d="M0 0l5.5 0 0.2 160.2 0.8 100.4 1.4 57.1 1.3 28.5 2.8 35.3 2.6 21.7 2.7 16.3 4.1 17.6 4.1 13.6 5.6 13.6 5.6 10.5 6.8 9.8 7.3 8.2 9 7.8 9.6 6.4 12.2 6.3 10.9 4.2 13.6 4.2 17.7 4 16.3 2.7 21.7 2.7 35.4 2.7 28.6 1.3 57.1 1.4 100.6 0.8 160.5 0.2 0 5.5-544 0 0-541.6zM376 0l168 0 0 167.1-27.2-1.6-23.1-2.1-20.4-2.9-16.3-3.4-8.2-2.3-6.8-2.3-6.8-2.7-5.4-2.6-5.8-3.3-5.1-3.4-4.3-3.4-4.5-4.1-3.8-4-3.7-4.8-3.2-4.7-3.6-6.4-2.8-5.9-2.7-6.7-4.2-13.6-3.5-16.3-2.8-19-2.2-23.1-1.6-27.1z"/>
<path fill="#b94d4d" d="M0 0l5 0 0.2 120.8 1 148 1.5 52.9 1.3 27.2 2.7 33.9 2.7 21.7 2.8 16.3 4.1 17.7 4.3 13.5 3.8 9.6 7 13.5 5.6 8.2 8.3 9.6 9.5 8.2 8.2 5.6 13.6 7 13.6 5.2 15 4.2 19 4 19 2.8 25.9 2.7 20.4 1.4 28.5 1.4 54.4 1.4 146.9 1 119.7 0.2 0 5-544 0 0-541.6zM380.4 0l163.6 0 0 162.7-25.8-1.6-23.2-2.2-19-2.8-16.3-3.6-13.6-4.3-6.8-2.7-5.5-2.6-5.4-3.1-5.4-3.6-4.1-3.2-4.4-4-3.8-4.1-4.1-5.1-6.1-9.8-2.6-5.5-2.8-6.8-4.4-13.5-3.6-16.3-2.9-19-2.1-21.7-1.7-25.8z"/>
<path fill="#b44d4d" d="M0 0l4.5 0 0.3 154.8 0.6 46.7 0.6 78.1 0.3 10.9 0.5 5.4 0.6 29.9 0.8 8.1 0.5 17.7 0.8 6.2 0.6 12.8 0.8 4.5 0.6 10.4 0.7 3.1 0.6 7.8 0.8 3.2 0.7 7.6 0.7 1.7 0.5 5.1 1 4.1 0.4 4.1 0.8 1.8 0.7 5 0.6 1.2 0.7 4.2 0.7 1.3 0.7 4.1 0.7 1 0.5 3.1 0.8 1.5 0.6 2.6 0.8 1.6 0.5 2.4 0.8 1.4 0.7 2.7 0.7 0.9 0.5 1.8 0.9 1.6 0.8 2.5 0.9 1.4 0.4 1.3 0.6 0.7 2.2 4.8 4 6.7 2.8 4.1 5.4 6.8 4.6 4.8 4.1 3.9 6.8 5.4 10.9 6.8 4.7 2.2 0.7 0.6 2.2 0.7 0.5 0.6 5.9 2.1 0.9 0.7 2.7 0.7 1.4 0.8 2.5 0.6 1.6 0.8 2.6 0.5 1.5 0.8 3.1 0.6 1 0.6 4 0.7 1.4 0.8 4.2 0.6 1.2 0.6 5 0.8 1.8 0.7 5.2 0.6 1.6 0.7 6.4 0.7 3.2 0.8 6.2 0.5 3.3 0.8 7.7 0.6 3.2 0.7 10.4 0.6 3.2 0.7 14.1 0.7 6.3 0.8 17.6 0.6 6.8 0.7 31.3 0.6 6.8 0.6 12.3 0.3 76.4 0.5 48.7 0.6 152.3 0.3 0 4.5-544 0 0-541.6zM384.9 0l159.1 0 0 158.1-24.5-1.5-21.7-2.2-19.1-3-15.4-3.4-13.1-4.2-6.5-2.6-5.8-2.8-5.4-3.1-5.4-3.6-8.2-7-7-8-3.7-5.4-2.9-4.9-5.3-11.4-4.5-13.6-3.8-16.2-2.8-17.7-2.3-21.7-1.6-24.4z"/>
</g>
<path fill="none" stroke="#0000c7" stroke-width="1" d="M65.2 0l0.6 110 1.1 74.6 1.1 34 1.1 24.4 1.6 23.6 1.6 17.1 2.5 20 2.7 15.8 1.4 6.4 2.7 10.8 4.1 12.3 4.1 9.3 2.7 4.9 2.7 4 2.7 3.3 2.7 2.5 2.8 1.6 1.3 0.5 1.4 0.1 1.3-0.3 1.4-0.9 0.6-0.7 0.8-1.3 1.3-3.7 1.3-8.6 0.6-13.5 2.1-181.9 0.8-164.3M544 426.7l-170 0.8-178.2 2.1-13.6 0.7-4 0.5-4.2 0.9-3.5 1.3-1.7 1.4-0.8 1.4-0.2 1.3 0.2 1.4 0.5 1.3 1.7 2.7 2.5 2.8 3.3 2.7 4.1 2.7 4.9 2.7 9.4 4.1 12.5 4.1 10.7 2.6 6.6 1.4 16 2.7 18.2 2.3 19.6 1.8 20.2 1.4 29.1 1.3 29 0.9 74.8 1.2 112.9 0.6"/>
<path fill="none" stroke="#003cff" stroke-width="1" d="M47.6 0l0.5 137.1 0.5 47.5 0.6 38 1.1 36.7 1.3 27.1 1.4 22.4 2.2 22.4 2.6 20.4 3.4 18.6 4.1 16.5 4.1 12.7 2.7 7 2.7 6.2 2.7 5.5 4.1 7.2 4.1 6.2 3.2 4.3 3.6 4.4 4.7 5.1 4.3 4 4.8 4.1 5.4 4.1 5.3 3.4 5.7 3.4 5.2 2.7 5.8 2.7 7.7 3.1 6.8 2.4 8.5 2.6 16.7 4.1 17 3.1 20.4 2.7 21.8 2.1 23.4 1.6 29.8 1.4 33.8 0.9 38.1 0.7 47.6 0.5 138.7 0.5M544 395.4l-131.9 0-66.7-0.4-25.8-0.4-21.8-0.7-19-0.9-16.3-1.2-15-1.6-13.6-2-12.2-2.5-10.9-3.1-9.5-3.6-8.5-4.3-3.8-2.3-4-3-6.4-5.6-3.2-3.5-2.6-3.3-4.5-6.8-4.1-8.1-3.7-9.7-3.1-10.7-2.5-12.2-2.1-13.6-1.7-16.3-1.1-16.2-0.9-19-1.1-47.6-0.4-66.5 0-130.3"/>
<path fill="none" stroke="#00b1ff" stroke-width="1" d="M37.2 0l0.4 146.6 0.4 48.9 0.6 38 0.9 32.6 1.2 31.2 1.5 23.5 1.9 22.6 2.7 21.8 3.3 19 3.9 16.3 4.2 13.5 3 7.8 2.6 5.8 5.6 10.6 2.7 4.4 4.1 5.7 4 5 4.1 4.4 4.1 3.9 4.7 4 4.8 3.6 5.5 3.6 6.4 3.7 5.5 2.7 6.1 2.7 7.1 2.7 12.9 4.1 16.9 4.1 18.5 3.2 21.8 2.8 23.1 2 24.1 1.5 30.3 1.2 32.6 0.8 40.8 0.7 46.3 0.4 148.2 0.4M544 369.6l-108.8-0.2-63.9-0.6-24.5-0.6-21.8-0.8-19-1.2-16.3-1.3-15-1.8-13.6-2.3-12.2-2.8-10.9-3.4-9.5-3.8-8.2-4.4-6.8-4.7-6.8-6-5.4-6.2-5.3-7.8-4.2-8.1-3.8-9.5-3.2-10.9-2.8-12.2-2.2-13.6-1.7-14.9-1.4-16.3-1-17.6-0.9-21.8-0.6-24.4-0.6-63.8-0.2-108.6"/>
<path fill="none" stroke="#26ffd9" stroke-width="1" d="M29.4 0l0.4 153.4 0.9 88.2 0.8 32.6 1.1 29.6 1.5 24.7 1.9 23.1 2.6 21.7 3.1 19 3.7 16.3 2.2 7.8 2.4 7.1 3 8.2 2.4 5.4 3.1 6.1 2.7 4.8 3.5 5.4 3.3 4.6 4.1 4.9 3.8 4.1 4.3 4.1 5 4 4.6 3.3 5.4 3.5 4.8 2.7 6.1 3 5.5 2.5 8.1 3 13.6 4.2 16.3 3.8 19 3.2 21.8 2.6 23.1 2 24.5 1.4 29.9 1.2 32.7 0.8 88.4 0.9 155 0.4M544 344.3l-93.8-0.3-58.5-0.8-23.1-0.7-20.4-0.9-17.7-1.1-16.3-1.6-15-1.9-13.6-2.5-10.9-2.6-10.5-3.4-9.7-4.1-7.5-4-7.6-5.3-6.3-5.6-5.9-6.8-4.6-6.8-4.4-8.1-3.9-9.5-3.4-10.9-2.6-10.8-2.2-12.3-2-14.9-1.5-16.3-1.2-17.6-0.9-20.4-0.7-23.1-0.8-58.3-0.3-93.7"/>
<path fill="none" stroke="#9bff64" stroke-width="1" d="M23 0l0.4 156.1 0.9 91 0.8 33.9 1.1 29.9 1.4 24.4 1.8 23.1 2.5 21.7 3.1 19 3.7 16.3 2.1 7.7 2.3 7.2 4.8 12.2 3.3 6.8 3 5.5 3.4 5.4 3.6 4.9 3.8 4.6 3.8 4.1 4.3 4 4.9 4.1 5 3.6 5 3.2 4.9 2.7 6.4 3.2 5.4 2.3 7 2.7 13.4 4.1 9.5 2.3 8.2 1.8 19 3.1 21.8 2.6 23.1 1.9 24.5 1.4 28.6 1.1 35.3 0.8 91.1 0.9 157.8 0.4M544 317.8l-80.2-0.4-54.4-1-21.8-0.8-19-1.1-16.4-1.2-14.9-1.6-13.6-2-12.3-2.4-10.8-2.7-9.7-3.2-9.4-4-7.5-4.2-7.4-5.1-6.4-5.7-5.9-6.8-4.7-6.8-4.4-8.2-3.4-8.1-3.6-10.9-2.7-10.8-2.3-12.2-2-13.6-1.5-15-1.3-16.2-1-19-0.8-21.8-1-52.9-0.4-80.1"/>
<path fill="none" stroke="#ffef00" stroke-width="1" d="M17.6 0l0.3 160.2 0.9 92.3 0.8 33.9 1.1 29.9 1.4 25.8 1.9 23.1 2.5 21.7 3.1 19 3.7 16.3 2.1 7.5 2.4 7.4 3 8 2.4 5.6 3 6 2.8 4.8 3.5 5.5 3.3 4.4 4 4.9 4.1 4.2 4.5 4.1 5 4 5.5 3.8 5.1 3.1 5.1 2.7 6.1 2.9 6.3 2.5 7.3 2.6 14.7 4.2 16.6 3.5 19 3 20.4 2.3 23.1 1.8 24.5 1.3 29.9 1.1 34 0.8 92.5 0.9 160.5 0.3M544 288.5l-69.4-0.6-47.6-1.2-19-0.9-17.7-1.2-14.9-1.4-13.6-1.6-12.3-2-12.2-2.6-9.8-2.8-9.3-3.3-8.1-3.6-8.2-4.7-6.3-4.7-5.9-5.3-4.9-5.5-4.9-6.8-4.5-8.2-3.6-8.1-3.3-9.5-2.6-9.5-2.4-10.9-2.2-13.6-1.6-13.5-1.4-15-1.1-17.6-0.9-19-1.2-47.5-0.6-67.9"/>
<path fill="none" stroke="#ff7a00" stroke-width="1" d="M12.8 0l0.3 162.9 0.9 92.3 0.8 36.7 1 28.5 1.4 25.8 1.8 23 2.5 21.8 3 18.6 1.7 8.5 2.3 9.5 4.1 14 2.8 7.4 2.4 5.8 3 6.1 2.7 4.9 3.4 5.3 3.4 4.8 4.1 4.9 4.1 4.3 4.1 3.8 4.6 3.9 4.9 3.4 5.3 3.4 4.9 2.7 6.1 2.9 5.8 2.5 7.8 2.9 8.2 2.5 6.8 1.8 16.6 3.7 18.7 2.9 21.9 2.5 23 1.8 25.8 1.4 28.6 1 36.7 0.8 92.5 0.9 163.2 0.3M544 254.4l-54.4-0.8-40.8-1.4-17.7-1.1-14.9-1.2-13.6-1.5-12.3-1.7-12.2-2.3-9.5-2.3-9.6-2.8-8.1-3.1-8.2-3.9-6.8-4-5.9-4.3-6-5.4-4.9-5.5-4.9-6.8-3.9-6.7-3.2-6.8-3.2-8.2-2.9-9.5-2.6-10.8-2-10.9-1.7-12.2-1.5-13.6-1.3-14.9-1-17.7-1.5-40.7-0.8-54.3"/>
<path fill="none" stroke="#ff0500" stroke-width="1" d="M8.6 0l0.3 165.6 0.8 93.7 0.8 36.6 1.1 29.9 1.4 25.8 1.8 23.1 2.5 21.7 3.1 19 2 9.5 2 8.1 4.1 13.6 2.8 7.6 2.6 6 2.8 5.7 2.7 4.9 2.8 4.3 4 5.7 4.1 4.9 4.1 4.2 4.6 4.2 4.9 3.9 5.5 3.8 5.3 3.2 5.2 2.7 5.8 2.7 6.7 2.7 6.9 2.4 14.9 4.2 16.4 3.4 19 3 21.8 2.3 23.1 1.8 25.8 1.3 29.9 1.1 36.8 0.7 92.4 0.8 164.6 0.3M544 212.1l-40.8-1.2-32.6-1.8-13.6-1.1-12.3-1.4-11.4-1.6-10.3-1.9-9.6-2.1-8.1-2.3-8.2-2.7-7.6-3.2-7.3-3.8-5.5-3.5-5.4-4.1-5.4-4.9-4.9-5.5-4-5.4-3.4-5.5-3.4-6.7-3.4-8.1-2.7-8.2-2.2-8.1-2.1-9.5-2-10.9-1.5-10.9-1.3-12.2-1.2-13.6-1.8-32.5-1.1-39.4"/>
<g stroke="#000" stroke-width="1" stroke-dasharray="1 3" fill="none" shape-rendering="crispEdges" opacity=".52">
<path d="M51.5 0V543"/>
<path d="M0 490.5H544"/>
<path d="M103.5 0V543"/>
<path d="M0 438.5H544"/>
<path d="M154.5 0V543"/>
<path d="M0 387.5H544"/>
<path d="M206.5 0V543"/>
<path d="M0 335.5H544"/>
<path d="M258.5 0V543"/>
<path d="M0 284.5H544"/>
<path d="M309.5 0V543"/>
<path d="M0 232.5H544"/>
<path d="M361.5 0V543"/>
<path d="M0 180.5H544"/>
<path d="M412.5 0V543"/>
<path d="M0 129.5H544"/>
<path d="M464.5 0V543"/>
<path d="M0 77.5H544"/>
<path d="M516.5 0V543"/>
<path d="M0 26.5H544"/>
</g>
<g stroke="#000" stroke-width="1" stroke-dasharray="1 1" fill="none" shape-rendering="crispEdges">
<path d="M0.5 0V543"/>
<path d="M0 542.5H544"/>
</g>
<g stroke="#000" stroke-width="1" fill="none" shape-rendering="crispEdges">
<path d="M0.5 543v-6"/>
<path d="M0 542.5h6"/>
<path d="M51.5 543v-6"/>
<path d="M0 490.5h6"/>
<path d="M103.5 543v-6"/>
<path d="M0 438.5h6"/>
<path d="M154.5 543v-6"/>
<path d="M0 387.5h6"/>
<path d="M206.5 543v-6"/>
<path d="M0 335.5h6"/>
<path d="M258.5 543v-6"/>
<path d="M0 284.5h6"/>
<path d="M309.5 543v-6"/>
<path d="M0 232.5h6"/>
<path d="M361.5 543v-6"/>
<path d="M0 180.5h6"/>
<path d="M412.5 543v-6"/>
<path d="M0 129.5h6"/>
<path d="M464.5 543v-6"/>
<path d="M0 77.5h6"/>
<path d="M516.5 543v-6"/>
<path d="M0 26.5h6"/>
</g>
<path d="M88.7 129.0C88.8 138.8 89.0 170.7 89.2 188.0C89.4 205.3 89.6 217.9 90.0 232.8C90.4 247.7 90.8 262.6 91.4 277.5C92.0 292.4 92.7 309.5 93.6 322.2C94.5 334.9 95.5 344.8 96.8 353.5C98.1 362.2 99.7 368.5 101.3 374.5C103.0 380.5 104.0 384.4 106.7 389.3C109.3 394.2 112.8 399.9 117.2 403.8C121.6 407.7 127.7 409.8 132.9 412.9C138.1 415.9 143.4 418.6 148.6 422.1C153.9 425.6 159.1 430.0 164.4 433.9C169.6 437.8 174.9 442.4 180.1 445.7C185.3 449.0 191.0 451.8 195.8 453.5C200.6 455.2 204.5 456.1 208.9 456.2C213.3 456.3 217.2 455.6 222.0 454.3C226.8 453.0 232.5 449.9 237.7 448.3C242.9 446.6 248.1 444.9 253.4 444.4C258.6 443.9 263.1 444.0 269.2 445.1C275.3 446.2 283.1 448.8 290.1 450.9C297.1 453.0 305.4 456.1 311.1 457.8C316.8 459.5 319.8 460.6 324.1 461.3C328.5 462.0 332.4 462.2 337.2 461.8C342.0 461.3 347.7 460.2 352.9 458.6C358.1 457.0 363.4 453.9 368.6 452.1C373.9 450.3 379.6 448.5 384.4 447.6C389.2 446.7 392.7 446.5 397.5 446.6C402.3 446.7 408.0 447.2 413.2 448.2C418.4 449.2 423.2 451.0 428.9 452.6C434.6 454.2 441.5 456.6 447.2 458.1C452.9 459.6 457.8 460.9 463.0 461.8C468.2 462.7 473.5 463.4 478.7 463.4C483.9 463.4 489.2 463.0 494.4 461.8C499.6 460.6 504.9 457.9 510.1 456.0C515.3 454.1 521.0 451.7 525.8 450.3C530.6 448.9 535.9 448.1 538.9 447.6C541.9 447.1 543.1 447.2 544.0 447.1" fill="none" stroke="#000" stroke-width="6.7" stroke-linejoin="round" stroke-linecap="butt"/>
</g>
<g font-size="13.33px" fill="#000">
<text x="49.5" y="581.5" text-anchor="middle">0.4</text>
<text x="46.5" y="571.0" text-anchor="end">0.4</text>
<text x="100.5" y="581.5" text-anchor="middle">0.6</text>
<text x="46.5" y="519.0" text-anchor="end">0.6</text>
<text x="152.5" y="581.5" text-anchor="middle">0.8</text>
<text x="46.5" y="467.0" text-anchor="end">0.8</text>
<text x="203.5" y="581.5" text-anchor="middle">1</text>
<text x="46.5" y="416.0" text-anchor="end">1</text>
<text x="255.5" y="581.5" text-anchor="middle">1.2</text>
<text x="46.5" y="364.0" text-anchor="end">1.2</text>
<text x="307.5" y="581.5" text-anchor="middle">1.4</text>
<text x="46.5" y="313.0" text-anchor="end">1.4</text>
<text x="358.5" y="581.5" text-anchor="middle">1.6</text>
<text x="46.5" y="261.0" text-anchor="end">1.6</text>
<text x="410.5" y="581.5" text-anchor="middle">1.8</text>
<text x="46.5" y="209.0" text-anchor="end">1.8</text>
<text x="461.5" y="581.5" text-anchor="middle">2</text>
<text x="46.5" y="158.0" text-anchor="end">2</text>
<text x="513.5" y="581.5" text-anchor="middle">2.2</text>
<text x="46.5" y="106.0" text-anchor="end">2.2</text>
<text x="565.5" y="581.5" text-anchor="middle">2.4</text>
<text x="46.5" y="55.0" text-anchor="end">2.4</text>
</g>
<g font-family="'Liberation Serif',serif" font-size="12px" style="font-family:'Liberation Serif',serif">
<text x="254" y="601.5" textLength="131" lengthAdjust="spacingAndGlyphs" style="font-family:'Liberation Serif',serif">A-B bond distance (Å)</text>
<text transform="translate(18.6,364) rotate(-90)" textLength="133" lengthAdjust="spacingAndGlyphs" style="font-family:'Liberation Serif',serif">B-C bond distance (Å)</text>
</g>
</svg>
</div>
</body></html>
